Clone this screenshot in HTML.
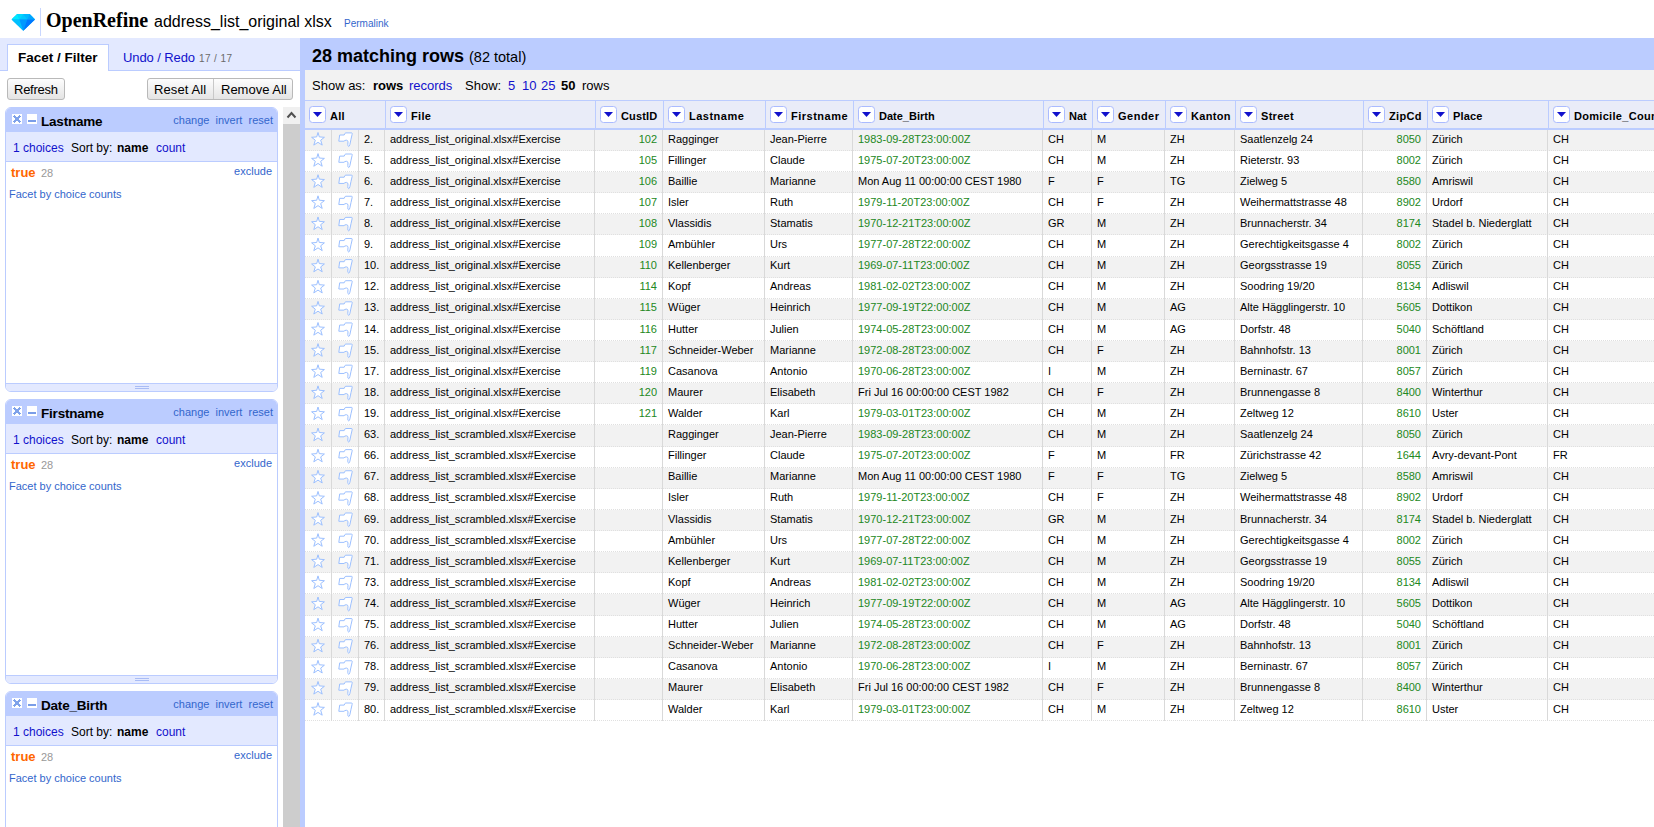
<!DOCTYPE html><html><head><meta charset="utf-8"><style>
html,body{margin:0;padding:0;background:#fff;width:1654px;height:827px;overflow:hidden;}
body{font-family:"Liberation Sans", sans-serif;position:relative;}
.t{position:absolute;white-space:nowrap;}
.r{position:absolute;}
</style></head><body>
<svg style="position:absolute;left:0;top:0" width="40" height="38" viewBox="0 0 40 38">
<polygon points="17.3,13.9 29.6,13.9 35,19.6 23.3,30.8 11.6,19.6" fill="#00b0ff"/>
<polygon points="17.3,13.9 29.6,13.9 35,19.6 11.6,19.6" fill="#00c8ff"/>
<polygon points="11.6,19.6 17.3,13.9 19.5,19.6" fill="#00eaff"/>
<polygon points="17.3,13.9 23.3,13.9 19.5,19.6" fill="#00d8ff"/>
<polygon points="23.3,13.9 29.6,13.9 27.2,19.6" fill="#00b8ff"/>
<polygon points="29.6,13.9 35,19.6 27.2,19.6" fill="#00a4ff"/>
<polygon points="11.6,19.6 19.5,19.6 23.3,30.8" fill="#00c0ff"/>
<polygon points="19.5,19.6 27.2,19.6 23.3,30.8" fill="#0098ff"/>
<polygon points="27.2,19.6 35,19.6 23.3,30.8" fill="#0078ff"/>
</svg>
<div class="r" style="left:40px;top:8px;width:1px;height:28px;background:#c8d6ff;"></div>
<div class="t" style="top:10px;font-size:20px;line-height:20px;color:#000;left:46px;font-weight:bold;font-family:'Liberation Serif', serif;">OpenRefine</div>
<div class="t" style="top:14px;font-size:16px;line-height:16px;color:#000;left:154px;">address_list_original xlsx</div>
<div class="t" style="top:19px;font-size:10px;line-height:10px;color:#3366cc;left:344px;">Permalink</div>
<div class="r" style="left:0px;top:38px;width:300px;height:32px;background:#e3e9ff;"></div>
<div class="r" style="left:0px;top:70px;width:300px;height:1px;background:#bbccff;"></div>
<div class="r" style="left:7px;top:44px;width:100px;height:26px;background:#fff;border:1px solid #bbccff;border-bottom:none;"></div>
<div class="r" style="left:8px;top:70px;width:100px;height:1px;background:#fff;"></div>
<div class="t" style="top:51px;font-size:13.5px;line-height:13.5px;color:#000;left:18px;font-weight:bold;">Facet / Filter</div>
<div class="t" style="top:51px;font-size:13px;line-height:13px;color:#1111cc;left:123px;letter-spacing:-0.1px;">Undo / Redo</div>
<div class="t" style="top:54px;font-size:10px;line-height:10px;color:#6a6a6a;left:199px;letter-spacing:0.4px;">17 / 17</div>
<div class="r" style="left:7px;top:78px;width:58px;height:22px;background:linear-gradient(#fdfdfd,#e4e4e4);border:1px solid #b9b9b9;border-radius:3px;box-sizing:border-box;"></div>
<div class="t" style="top:83px;font-size:13px;line-height:13px;color:#000;left:14px;letter-spacing:-0.25px;">Refresh</div>
<div class="r" style="left:147px;top:78px;width:146px;height:22px;background:linear-gradient(#fdfdfd,#e4e4e4);border:1px solid #b9b9b9;border-radius:3px;box-sizing:border-box;"></div>
<div class="r" style="left:213px;top:79px;width:1px;height:20px;background:#c8c8c8;"></div>
<div class="t" style="top:83px;font-size:13px;line-height:13px;color:#000;left:154px;letter-spacing:0.1px;">Reset All</div>
<div class="t" style="top:83px;font-size:13px;line-height:13px;color:#000;left:221px;">Remove All</div>
<div class="r" style="left:283px;top:107px;width:17px;height:17px;background:#f0f0f0;"></div>
<svg style="position:absolute;left:283px;top:107px" width="17" height="17"><polyline points="4.5,10.5 8.5,6 12.5,10.5" fill="none" stroke="#505050" stroke-width="2"/></svg>
<div class="r" style="left:283px;top:124px;width:17px;height:703px;background:#cdcdcd;"></div>
<div class="r" style="left:5px;top:107px;width:273px;height:285px;box-sizing:border-box;border:1px solid #bbccff;border-radius:6px;background:#fff;overflow:hidden"><div style="position:absolute;left:0;top:0;right:0;height:24px;background:#bbccff"></div><div style="position:absolute;left:0;top:24px;right:0;height:29px;background:#e3e9ff;border-bottom:1px solid #bbccff"></div><div style="position:absolute;left:0;top:275px;right:0;height:8px;background:#e3e9ff;border-top:1px solid #bbccff"></div></div>
<div class="r" style="left:135px;top:386px;width:14px;height:1px;background:#a9bcf5;"></div>
<div class="r" style="left:135px;top:388px;width:14px;height:1px;background:#a9bcf5;"></div>
<svg style="position:absolute;left:12px;top:114px" width="10" height="10"><rect width="10" height="10" fill="#fff"/><g fill="#7fa2ea" shape-rendering="crispEdges"><rect x="2" y="1" width="1" height="1"/><rect x="7" y="1" width="1" height="1"/><rect x="1" y="2" width="1" height="1"/><rect x="2" y="2" width="1" height="1"/><rect x="3" y="2" width="1" height="1"/><rect x="6" y="2" width="1" height="1"/><rect x="7" y="2" width="1" height="1"/><rect x="8" y="2" width="1" height="1"/><rect x="2" y="3" width="1" height="1"/><rect x="3" y="3" width="1" height="1"/><rect x="4" y="3" width="1" height="1"/><rect x="5" y="3" width="1" height="1"/><rect x="6" y="3" width="1" height="1"/><rect x="7" y="3" width="1" height="1"/><rect x="3" y="4" width="1" height="1"/><rect x="4" y="4" width="1" height="1"/><rect x="5" y="4" width="1" height="1"/><rect x="6" y="4" width="1" height="1"/><rect x="3" y="5" width="1" height="1"/><rect x="4" y="5" width="1" height="1"/><rect x="5" y="5" width="1" height="1"/><rect x="6" y="5" width="1" height="1"/><rect x="2" y="6" width="1" height="1"/><rect x="3" y="6" width="1" height="1"/><rect x="4" y="6" width="1" height="1"/><rect x="5" y="6" width="1" height="1"/><rect x="6" y="6" width="1" height="1"/><rect x="7" y="6" width="1" height="1"/><rect x="1" y="7" width="1" height="1"/><rect x="2" y="7" width="1" height="1"/><rect x="3" y="7" width="1" height="1"/><rect x="6" y="7" width="1" height="1"/><rect x="7" y="7" width="1" height="1"/><rect x="8" y="7" width="1" height="1"/><rect x="2" y="8" width="1" height="1"/><rect x="7" y="8" width="1" height="1"/></g></svg>
<svg style="position:absolute;left:27px;top:114px" width="10" height="10"><rect width="10" height="10" fill="#fff"/><rect x="1" y="6" width="8" height="2" fill="#7a9de8"/></svg>
<div class="t" style="top:115px;font-size:13.5px;line-height:13.5px;color:#000;left:41px;font-weight:bold;letter-spacing:-0.2px;">Lastname</div>
<div class="t" style="top:115px;font-size:11px;line-height:11px;color:#3366cc;right:1381px;">change&nbsp; invert&nbsp; reset</div>
<div class="t" style="top:142px;font-size:12px;line-height:12px;color:#1111cc;left:13px;">1 choices</div>
<div class="t" style="top:142px;font-size:12px;line-height:12px;color:#000;left:71px;">Sort by:</div>
<div class="t" style="top:142px;font-size:12px;line-height:12px;color:#000;left:117px;font-weight:bold;">name</div>
<div class="t" style="top:142px;font-size:12px;line-height:12px;color:#1111cc;left:156px;">count</div>
<div class="t" style="top:166px;font-size:13px;line-height:13px;color:#ff6600;left:11px;font-weight:bold;">true</div>
<div class="t" style="top:168px;font-size:11px;line-height:11px;color:#999999;left:41px;">28</div>
<div class="t" style="top:166px;font-size:11px;line-height:11px;color:#3366cc;right:1382px;">exclude</div>
<div class="t" style="top:189px;font-size:11px;line-height:11px;color:#3366cc;left:9px;">Facet by choice counts</div>
<div class="r" style="left:5px;top:399px;width:273px;height:285px;box-sizing:border-box;border:1px solid #bbccff;border-radius:6px;background:#fff;overflow:hidden"><div style="position:absolute;left:0;top:0;right:0;height:24px;background:#bbccff"></div><div style="position:absolute;left:0;top:24px;right:0;height:29px;background:#e3e9ff;border-bottom:1px solid #bbccff"></div><div style="position:absolute;left:0;top:275px;right:0;height:8px;background:#e3e9ff;border-top:1px solid #bbccff"></div></div>
<div class="r" style="left:135px;top:678px;width:14px;height:1px;background:#a9bcf5;"></div>
<div class="r" style="left:135px;top:680px;width:14px;height:1px;background:#a9bcf5;"></div>
<svg style="position:absolute;left:12px;top:406px" width="10" height="10"><rect width="10" height="10" fill="#fff"/><g fill="#7fa2ea" shape-rendering="crispEdges"><rect x="2" y="1" width="1" height="1"/><rect x="7" y="1" width="1" height="1"/><rect x="1" y="2" width="1" height="1"/><rect x="2" y="2" width="1" height="1"/><rect x="3" y="2" width="1" height="1"/><rect x="6" y="2" width="1" height="1"/><rect x="7" y="2" width="1" height="1"/><rect x="8" y="2" width="1" height="1"/><rect x="2" y="3" width="1" height="1"/><rect x="3" y="3" width="1" height="1"/><rect x="4" y="3" width="1" height="1"/><rect x="5" y="3" width="1" height="1"/><rect x="6" y="3" width="1" height="1"/><rect x="7" y="3" width="1" height="1"/><rect x="3" y="4" width="1" height="1"/><rect x="4" y="4" width="1" height="1"/><rect x="5" y="4" width="1" height="1"/><rect x="6" y="4" width="1" height="1"/><rect x="3" y="5" width="1" height="1"/><rect x="4" y="5" width="1" height="1"/><rect x="5" y="5" width="1" height="1"/><rect x="6" y="5" width="1" height="1"/><rect x="2" y="6" width="1" height="1"/><rect x="3" y="6" width="1" height="1"/><rect x="4" y="6" width="1" height="1"/><rect x="5" y="6" width="1" height="1"/><rect x="6" y="6" width="1" height="1"/><rect x="7" y="6" width="1" height="1"/><rect x="1" y="7" width="1" height="1"/><rect x="2" y="7" width="1" height="1"/><rect x="3" y="7" width="1" height="1"/><rect x="6" y="7" width="1" height="1"/><rect x="7" y="7" width="1" height="1"/><rect x="8" y="7" width="1" height="1"/><rect x="2" y="8" width="1" height="1"/><rect x="7" y="8" width="1" height="1"/></g></svg>
<svg style="position:absolute;left:27px;top:406px" width="10" height="10"><rect width="10" height="10" fill="#fff"/><rect x="1" y="6" width="8" height="2" fill="#7a9de8"/></svg>
<div class="t" style="top:407px;font-size:13.5px;line-height:13.5px;color:#000;left:41px;font-weight:bold;letter-spacing:-0.2px;">Firstname</div>
<div class="t" style="top:407px;font-size:11px;line-height:11px;color:#3366cc;right:1381px;">change&nbsp; invert&nbsp; reset</div>
<div class="t" style="top:434px;font-size:12px;line-height:12px;color:#1111cc;left:13px;">1 choices</div>
<div class="t" style="top:434px;font-size:12px;line-height:12px;color:#000;left:71px;">Sort by:</div>
<div class="t" style="top:434px;font-size:12px;line-height:12px;color:#000;left:117px;font-weight:bold;">name</div>
<div class="t" style="top:434px;font-size:12px;line-height:12px;color:#1111cc;left:156px;">count</div>
<div class="t" style="top:458px;font-size:13px;line-height:13px;color:#ff6600;left:11px;font-weight:bold;">true</div>
<div class="t" style="top:460px;font-size:11px;line-height:11px;color:#999999;left:41px;">28</div>
<div class="t" style="top:458px;font-size:11px;line-height:11px;color:#3366cc;right:1382px;">exclude</div>
<div class="t" style="top:481px;font-size:11px;line-height:11px;color:#3366cc;left:9px;">Facet by choice counts</div>
<div class="r" style="left:5px;top:691px;width:273px;height:285px;box-sizing:border-box;border:1px solid #bbccff;border-radius:6px;background:#fff;overflow:hidden"><div style="position:absolute;left:0;top:0;right:0;height:24px;background:#bbccff"></div><div style="position:absolute;left:0;top:24px;right:0;height:29px;background:#e3e9ff;border-bottom:1px solid #bbccff"></div><div style="position:absolute;left:0;top:275px;right:0;height:8px;background:#e3e9ff;border-top:1px solid #bbccff"></div></div>
<div class="r" style="left:135px;top:970px;width:14px;height:1px;background:#a9bcf5;"></div>
<div class="r" style="left:135px;top:972px;width:14px;height:1px;background:#a9bcf5;"></div>
<svg style="position:absolute;left:12px;top:698px" width="10" height="10"><rect width="10" height="10" fill="#fff"/><g fill="#7fa2ea" shape-rendering="crispEdges"><rect x="2" y="1" width="1" height="1"/><rect x="7" y="1" width="1" height="1"/><rect x="1" y="2" width="1" height="1"/><rect x="2" y="2" width="1" height="1"/><rect x="3" y="2" width="1" height="1"/><rect x="6" y="2" width="1" height="1"/><rect x="7" y="2" width="1" height="1"/><rect x="8" y="2" width="1" height="1"/><rect x="2" y="3" width="1" height="1"/><rect x="3" y="3" width="1" height="1"/><rect x="4" y="3" width="1" height="1"/><rect x="5" y="3" width="1" height="1"/><rect x="6" y="3" width="1" height="1"/><rect x="7" y="3" width="1" height="1"/><rect x="3" y="4" width="1" height="1"/><rect x="4" y="4" width="1" height="1"/><rect x="5" y="4" width="1" height="1"/><rect x="6" y="4" width="1" height="1"/><rect x="3" y="5" width="1" height="1"/><rect x="4" y="5" width="1" height="1"/><rect x="5" y="5" width="1" height="1"/><rect x="6" y="5" width="1" height="1"/><rect x="2" y="6" width="1" height="1"/><rect x="3" y="6" width="1" height="1"/><rect x="4" y="6" width="1" height="1"/><rect x="5" y="6" width="1" height="1"/><rect x="6" y="6" width="1" height="1"/><rect x="7" y="6" width="1" height="1"/><rect x="1" y="7" width="1" height="1"/><rect x="2" y="7" width="1" height="1"/><rect x="3" y="7" width="1" height="1"/><rect x="6" y="7" width="1" height="1"/><rect x="7" y="7" width="1" height="1"/><rect x="8" y="7" width="1" height="1"/><rect x="2" y="8" width="1" height="1"/><rect x="7" y="8" width="1" height="1"/></g></svg>
<svg style="position:absolute;left:27px;top:698px" width="10" height="10"><rect width="10" height="10" fill="#fff"/><rect x="1" y="6" width="8" height="2" fill="#7a9de8"/></svg>
<div class="t" style="top:699px;font-size:13.5px;line-height:13.5px;color:#000;left:41px;font-weight:bold;letter-spacing:-0.2px;">Date_Birth</div>
<div class="t" style="top:699px;font-size:11px;line-height:11px;color:#3366cc;right:1381px;">change&nbsp; invert&nbsp; reset</div>
<div class="t" style="top:726px;font-size:12px;line-height:12px;color:#1111cc;left:13px;">1 choices</div>
<div class="t" style="top:726px;font-size:12px;line-height:12px;color:#000;left:71px;">Sort by:</div>
<div class="t" style="top:726px;font-size:12px;line-height:12px;color:#000;left:117px;font-weight:bold;">name</div>
<div class="t" style="top:726px;font-size:12px;line-height:12px;color:#1111cc;left:156px;">count</div>
<div class="t" style="top:750px;font-size:13px;line-height:13px;color:#ff6600;left:11px;font-weight:bold;">true</div>
<div class="t" style="top:752px;font-size:11px;line-height:11px;color:#999999;left:41px;">28</div>
<div class="t" style="top:750px;font-size:11px;line-height:11px;color:#3366cc;right:1382px;">exclude</div>
<div class="t" style="top:773px;font-size:11px;line-height:11px;color:#3366cc;left:9px;">Facet by choice counts</div>
<div class="r" style="left:300px;top:38px;width:1354px;height:32px;background:#bbccff;"></div>
<div class="r" style="left:300px;top:38px;width:5px;height:789px;background:#bbccff;"></div>
<div class="t" style="top:47px;font-size:18px;line-height:18px;color:#000;left:312px;font-weight:bold;">28 matching rows</div>
<div class="t" style="top:50px;font-size:14.5px;line-height:14.5px;color:#000;left:469px;">(82 total)</div>
<div class="r" style="left:305px;top:70px;width:1349px;height:30px;background:#f2f2f2;"></div>
<div class="t" style="top:79px;font-size:13px;line-height:13px;color:#000;left:312px;">Show as:</div>
<div class="t" style="top:79px;font-size:13px;line-height:13px;color:#000;left:373px;font-weight:bold;">rows</div>
<div class="t" style="top:79px;font-size:13px;line-height:13px;color:#1111cc;left:409px;">records</div>
<div class="t" style="top:79px;font-size:13px;line-height:13px;color:#000;left:465px;">Show:</div>
<div class="t" style="top:79px;font-size:13px;line-height:13px;color:#1111cc;left:508px;">5</div>
<div class="t" style="top:79px;font-size:13px;line-height:13px;color:#1111cc;left:522px;">10</div>
<div class="t" style="top:79px;font-size:13px;line-height:13px;color:#1111cc;left:541px;">25</div>
<div class="t" style="top:79px;font-size:13px;line-height:13px;color:#000;left:561px;font-weight:bold;">50</div>
<div class="t" style="top:79px;font-size:13px;line-height:13px;color:#000;left:582px;">rows</div>
<div class="r" style="left:305px;top:100px;width:1349px;height:1px;background:#bbccff;"></div>
<div class="r" style="left:305px;top:101px;width:1349px;height:27px;background:#e9ecf8;"></div>
<div class="r" style="left:305px;top:128px;width:1349px;height:2px;background:#bbccff;"></div>
<div class="r" style="left:385px;top:101px;width:1px;height:27px;background:#bbccff;"></div>
<div class="r" style="left:595px;top:101px;width:1px;height:27px;background:#bbccff;"></div>
<div class="r" style="left:663px;top:101px;width:1px;height:27px;background:#bbccff;"></div>
<div class="r" style="left:765px;top:101px;width:1px;height:27px;background:#bbccff;"></div>
<div class="r" style="left:853px;top:101px;width:1px;height:27px;background:#bbccff;"></div>
<div class="r" style="left:1043px;top:101px;width:1px;height:27px;background:#bbccff;"></div>
<div class="r" style="left:1092px;top:101px;width:1px;height:27px;background:#bbccff;"></div>
<div class="r" style="left:1165px;top:101px;width:1px;height:27px;background:#bbccff;"></div>
<div class="r" style="left:1235px;top:101px;width:1px;height:27px;background:#bbccff;"></div>
<div class="r" style="left:1363px;top:101px;width:1px;height:27px;background:#bbccff;"></div>
<div class="r" style="left:1427px;top:101px;width:1px;height:27px;background:#bbccff;"></div>
<div class="r" style="left:1548px;top:101px;width:1px;height:27px;background:#bbccff;"></div>
<svg style="position:absolute;left:309px;top:106px" width="17" height="17"><rect x="0.5" y="0.5" width="16" height="16" rx="3" ry="3" fill="#fff" stroke="#aabbff"/><polygon points="4,6 13,6 8.5,11" fill="#1111cc"/></svg>
<div class="t" style="top:111px;font-size:11px;line-height:11px;color:#000;left:330px;font-weight:bold;letter-spacing:0.3px;">All</div>
<svg style="position:absolute;left:390px;top:106px" width="17" height="17"><rect x="0.5" y="0.5" width="16" height="16" rx="3" ry="3" fill="#fff" stroke="#aabbff"/><polygon points="4,6 13,6 8.5,11" fill="#1111cc"/></svg>
<div class="t" style="top:111px;font-size:11px;line-height:11px;color:#000;left:411px;font-weight:bold;letter-spacing:0.3px;">File</div>
<svg style="position:absolute;left:600px;top:106px" width="17" height="17"><rect x="0.5" y="0.5" width="16" height="16" rx="3" ry="3" fill="#fff" stroke="#aabbff"/><polygon points="4,6 13,6 8.5,11" fill="#1111cc"/></svg>
<div class="t" style="top:111px;font-size:11px;line-height:11px;color:#000;left:621px;font-weight:bold;letter-spacing:0.15px;">CustID</div>
<svg style="position:absolute;left:668px;top:106px" width="17" height="17"><rect x="0.5" y="0.5" width="16" height="16" rx="3" ry="3" fill="#fff" stroke="#aabbff"/><polygon points="4,6 13,6 8.5,11" fill="#1111cc"/></svg>
<div class="t" style="top:111px;font-size:11px;line-height:11px;color:#000;left:689px;font-weight:bold;letter-spacing:0.5px;">Lastname</div>
<svg style="position:absolute;left:770px;top:106px" width="17" height="17"><rect x="0.5" y="0.5" width="16" height="16" rx="3" ry="3" fill="#fff" stroke="#aabbff"/><polygon points="4,6 13,6 8.5,11" fill="#1111cc"/></svg>
<div class="t" style="top:111px;font-size:11px;line-height:11px;color:#000;left:791px;font-weight:bold;letter-spacing:0.5px;">Firstname</div>
<svg style="position:absolute;left:858px;top:106px" width="17" height="17"><rect x="0.5" y="0.5" width="16" height="16" rx="3" ry="3" fill="#fff" stroke="#aabbff"/><polygon points="4,6 13,6 8.5,11" fill="#1111cc"/></svg>
<div class="t" style="top:111px;font-size:11px;line-height:11px;color:#000;left:879px;font-weight:bold;letter-spacing:0.0px;">Date_Birth</div>
<svg style="position:absolute;left:1048px;top:106px" width="17" height="17"><rect x="0.5" y="0.5" width="16" height="16" rx="3" ry="3" fill="#fff" stroke="#aabbff"/><polygon points="4,6 13,6 8.5,11" fill="#1111cc"/></svg>
<div class="t" style="top:111px;font-size:11px;line-height:11px;color:#000;left:1069px;font-weight:bold;letter-spacing:0.0px;">Nat</div>
<svg style="position:absolute;left:1097px;top:106px" width="17" height="17"><rect x="0.5" y="0.5" width="16" height="16" rx="3" ry="3" fill="#fff" stroke="#aabbff"/><polygon points="4,6 13,6 8.5,11" fill="#1111cc"/></svg>
<div class="t" style="top:111px;font-size:11px;line-height:11px;color:#000;left:1118px;font-weight:bold;letter-spacing:0.5px;">Gender</div>
<svg style="position:absolute;left:1170px;top:106px" width="17" height="17"><rect x="0.5" y="0.5" width="16" height="16" rx="3" ry="3" fill="#fff" stroke="#aabbff"/><polygon points="4,6 13,6 8.5,11" fill="#1111cc"/></svg>
<div class="t" style="top:111px;font-size:11px;line-height:11px;color:#000;left:1191px;font-weight:bold;letter-spacing:0.3px;">Kanton</div>
<svg style="position:absolute;left:1240px;top:106px" width="17" height="17"><rect x="0.5" y="0.5" width="16" height="16" rx="3" ry="3" fill="#fff" stroke="#aabbff"/><polygon points="4,6 13,6 8.5,11" fill="#1111cc"/></svg>
<div class="t" style="top:111px;font-size:11px;line-height:11px;color:#000;left:1261px;font-weight:bold;letter-spacing:0.3px;">Street</div>
<svg style="position:absolute;left:1368px;top:106px" width="17" height="17"><rect x="0.5" y="0.5" width="16" height="16" rx="3" ry="3" fill="#fff" stroke="#aabbff"/><polygon points="4,6 13,6 8.5,11" fill="#1111cc"/></svg>
<div class="t" style="top:111px;font-size:11px;line-height:11px;color:#000;left:1389px;font-weight:bold;letter-spacing:0.3px;">ZipCd</div>
<svg style="position:absolute;left:1432px;top:106px" width="17" height="17"><rect x="0.5" y="0.5" width="16" height="16" rx="3" ry="3" fill="#fff" stroke="#aabbff"/><polygon points="4,6 13,6 8.5,11" fill="#1111cc"/></svg>
<div class="t" style="top:111px;font-size:11px;line-height:11px;color:#000;left:1453px;font-weight:bold;letter-spacing:0.15px;">Place</div>
<svg style="position:absolute;left:1553px;top:106px" width="17" height="17"><rect x="0.5" y="0.5" width="16" height="16" rx="3" ry="3" fill="#fff" stroke="#aabbff"/><polygon points="4,6 13,6 8.5,11" fill="#1111cc"/></svg>
<div class="t" style="top:111px;font-size:11px;line-height:11px;color:#000;left:1574px;font-weight:bold;letter-spacing:0.3px;">Domicile_Country</div>
<div class="r" style="left:305px;top:130px;width:1349px;height:21px;background:#f2f2f2;"></div>
<div class="r" style="left:305px;top:150px;width:1349px;height:1px;background:repeating-linear-gradient(90deg,#e0e0e0 0 1px,transparent 1px 2px);"></div>
<svg style="position:absolute;left:311px;top:130px" width="15" height="17"><g transform="translate(0,0.50)"><polygon points="7,2.0 8.3,6.4 13.4,6.8 9.7,9.7 11.2,14.6 7,11.8 2.8,14.6 4.3,9.7 0.6,6.8 5.7,6.4" fill="#fff" stroke="#9cc0ff" stroke-width="1" stroke-linejoin="round"/></g></svg>
<svg style="position:absolute;left:336px;top:130px" width="18" height="18"><g transform="translate(0,0.20)"><path d="M3.7,4.8 L8.2,4.8 Q8.8,2.7 9.8,2.7 L15.8,2.7 Q16.4,3 16.1,4.2 L15,9 L13.9,14.2 Q13.4,16.3 12.7,16.2 Q11.7,16 11.8,14.2 L12,11.6 Q11.8,10 10.5,10 Q8.6,10 8,11 L2.8,11 Z" fill="#fff" stroke="#9cc0ff" stroke-width="1" stroke-linejoin="round"/></g></svg>
<div class="t" style="top:134px;font-size:11px;line-height:11px;color:#000;left:364px;">2.</div>
<div class="t" style="top:134px;font-size:11px;line-height:11px;color:#000;left:390px;">address_list_original.xlsx#Exercise</div>
<div class="t" style="top:134px;font-size:11px;line-height:11px;color:#228822;right:997px;">102</div>
<div class="t" style="top:134px;font-size:11px;line-height:11px;color:#000;left:668px;">Ragginger</div>
<div class="t" style="top:134px;font-size:11px;line-height:11px;color:#000;left:770px;">Jean-Pierre</div>
<div class="t" style="top:134px;font-size:11px;line-height:11px;color:#228822;left:858px;">1983-09-28T23:00:00Z</div>
<div class="t" style="top:134px;font-size:11px;line-height:11px;color:#000;left:1048px;">CH</div>
<div class="t" style="top:134px;font-size:11px;line-height:11px;color:#000;left:1097px;">M</div>
<div class="t" style="top:134px;font-size:11px;line-height:11px;color:#000;left:1170px;">ZH</div>
<div class="t" style="top:134px;font-size:11px;line-height:11px;color:#000;left:1240px;">Saatlenzelg 24</div>
<div class="t" style="top:134px;font-size:11px;line-height:11px;color:#228822;right:233px;">8050</div>
<div class="t" style="top:134px;font-size:11px;line-height:11px;color:#000;left:1432px;">Zürich</div>
<div class="t" style="top:134px;font-size:11px;line-height:11px;color:#000;left:1553px;">CH</div>
<div class="r" style="left:305px;top:171px;width:1349px;height:1px;background:repeating-linear-gradient(90deg,#e0e0e0 0 1px,transparent 1px 2px);"></div>
<svg style="position:absolute;left:311px;top:151px" width="15" height="17"><g transform="translate(0,0.62)"><polygon points="7,2.0 8.3,6.4 13.4,6.8 9.7,9.7 11.2,14.6 7,11.8 2.8,14.6 4.3,9.7 0.6,6.8 5.7,6.4" fill="#fff" stroke="#9cc0ff" stroke-width="1" stroke-linejoin="round"/></g></svg>
<svg style="position:absolute;left:336px;top:151px" width="18" height="18"><g transform="translate(0,0.31)"><path d="M3.7,4.8 L8.2,4.8 Q8.8,2.7 9.8,2.7 L15.8,2.7 Q16.4,3 16.1,4.2 L15,9 L13.9,14.2 Q13.4,16.3 12.7,16.2 Q11.7,16 11.8,14.2 L12,11.6 Q11.8,10 10.5,10 Q8.6,10 8,11 L2.8,11 Z" fill="#fff" stroke="#9cc0ff" stroke-width="1" stroke-linejoin="round"/></g></svg>
<div class="t" style="top:155px;font-size:11px;line-height:11px;color:#000;left:364px;">5.</div>
<div class="t" style="top:155px;font-size:11px;line-height:11px;color:#000;left:390px;">address_list_original.xlsx#Exercise</div>
<div class="t" style="top:155px;font-size:11px;line-height:11px;color:#228822;right:997px;">105</div>
<div class="t" style="top:155px;font-size:11px;line-height:11px;color:#000;left:668px;">Fillinger</div>
<div class="t" style="top:155px;font-size:11px;line-height:11px;color:#000;left:770px;">Claude</div>
<div class="t" style="top:155px;font-size:11px;line-height:11px;color:#228822;left:858px;">1975-07-20T23:00:00Z</div>
<div class="t" style="top:155px;font-size:11px;line-height:11px;color:#000;left:1048px;">CH</div>
<div class="t" style="top:155px;font-size:11px;line-height:11px;color:#000;left:1097px;">M</div>
<div class="t" style="top:155px;font-size:11px;line-height:11px;color:#000;left:1170px;">ZH</div>
<div class="t" style="top:155px;font-size:11px;line-height:11px;color:#000;left:1240px;">Rieterstr. 93</div>
<div class="t" style="top:155px;font-size:11px;line-height:11px;color:#228822;right:233px;">8002</div>
<div class="t" style="top:155px;font-size:11px;line-height:11px;color:#000;left:1432px;">Zürich</div>
<div class="t" style="top:155px;font-size:11px;line-height:11px;color:#000;left:1553px;">CH</div>
<div class="r" style="left:305px;top:172px;width:1349px;height:21px;background:#f2f2f2;"></div>
<div class="r" style="left:305px;top:192px;width:1349px;height:1px;background:repeating-linear-gradient(90deg,#e0e0e0 0 1px,transparent 1px 2px);"></div>
<svg style="position:absolute;left:311px;top:172px" width="15" height="17"><g transform="translate(0,0.73)"><polygon points="7,2.0 8.3,6.4 13.4,6.8 9.7,9.7 11.2,14.6 7,11.8 2.8,14.6 4.3,9.7 0.6,6.8 5.7,6.4" fill="#fff" stroke="#9cc0ff" stroke-width="1" stroke-linejoin="round"/></g></svg>
<svg style="position:absolute;left:336px;top:172px" width="18" height="18"><g transform="translate(0,0.43)"><path d="M3.7,4.8 L8.2,4.8 Q8.8,2.7 9.8,2.7 L15.8,2.7 Q16.4,3 16.1,4.2 L15,9 L13.9,14.2 Q13.4,16.3 12.7,16.2 Q11.7,16 11.8,14.2 L12,11.6 Q11.8,10 10.5,10 Q8.6,10 8,11 L2.8,11 Z" fill="#fff" stroke="#9cc0ff" stroke-width="1" stroke-linejoin="round"/></g></svg>
<div class="t" style="top:176px;font-size:11px;line-height:11px;color:#000;left:364px;">6.</div>
<div class="t" style="top:176px;font-size:11px;line-height:11px;color:#000;left:390px;">address_list_original.xlsx#Exercise</div>
<div class="t" style="top:176px;font-size:11px;line-height:11px;color:#228822;right:997px;">106</div>
<div class="t" style="top:176px;font-size:11px;line-height:11px;color:#000;left:668px;">Baillie</div>
<div class="t" style="top:176px;font-size:11px;line-height:11px;color:#000;left:770px;">Marianne</div>
<div class="t" style="top:176px;font-size:11px;line-height:11px;color:#000;left:858px;">Mon Aug 11 00:00:00 CEST 1980</div>
<div class="t" style="top:176px;font-size:11px;line-height:11px;color:#000;left:1048px;">F</div>
<div class="t" style="top:176px;font-size:11px;line-height:11px;color:#000;left:1097px;">F</div>
<div class="t" style="top:176px;font-size:11px;line-height:11px;color:#000;left:1170px;">TG</div>
<div class="t" style="top:176px;font-size:11px;line-height:11px;color:#000;left:1240px;">Zielweg 5</div>
<div class="t" style="top:176px;font-size:11px;line-height:11px;color:#228822;right:233px;">8580</div>
<div class="t" style="top:176px;font-size:11px;line-height:11px;color:#000;left:1432px;">Amriswil</div>
<div class="t" style="top:176px;font-size:11px;line-height:11px;color:#000;left:1553px;">CH</div>
<div class="r" style="left:305px;top:213px;width:1349px;height:1px;background:repeating-linear-gradient(90deg,#e0e0e0 0 1px,transparent 1px 2px);"></div>
<svg style="position:absolute;left:311px;top:193px" width="15" height="17"><g transform="translate(0,0.84)"><polygon points="7,2.0 8.3,6.4 13.4,6.8 9.7,9.7 11.2,14.6 7,11.8 2.8,14.6 4.3,9.7 0.6,6.8 5.7,6.4" fill="#fff" stroke="#9cc0ff" stroke-width="1" stroke-linejoin="round"/></g></svg>
<svg style="position:absolute;left:336px;top:193px" width="18" height="18"><g transform="translate(0,0.54)"><path d="M3.7,4.8 L8.2,4.8 Q8.8,2.7 9.8,2.7 L15.8,2.7 Q16.4,3 16.1,4.2 L15,9 L13.9,14.2 Q13.4,16.3 12.7,16.2 Q11.7,16 11.8,14.2 L12,11.6 Q11.8,10 10.5,10 Q8.6,10 8,11 L2.8,11 Z" fill="#fff" stroke="#9cc0ff" stroke-width="1" stroke-linejoin="round"/></g></svg>
<div class="t" style="top:197px;font-size:11px;line-height:11px;color:#000;left:364px;">7.</div>
<div class="t" style="top:197px;font-size:11px;line-height:11px;color:#000;left:390px;">address_list_original.xlsx#Exercise</div>
<div class="t" style="top:197px;font-size:11px;line-height:11px;color:#228822;right:997px;">107</div>
<div class="t" style="top:197px;font-size:11px;line-height:11px;color:#000;left:668px;">Isler</div>
<div class="t" style="top:197px;font-size:11px;line-height:11px;color:#000;left:770px;">Ruth</div>
<div class="t" style="top:197px;font-size:11px;line-height:11px;color:#228822;left:858px;">1979-11-20T23:00:00Z</div>
<div class="t" style="top:197px;font-size:11px;line-height:11px;color:#000;left:1048px;">CH</div>
<div class="t" style="top:197px;font-size:11px;line-height:11px;color:#000;left:1097px;">F</div>
<div class="t" style="top:197px;font-size:11px;line-height:11px;color:#000;left:1170px;">ZH</div>
<div class="t" style="top:197px;font-size:11px;line-height:11px;color:#000;left:1240px;">Weihermattstrasse 48</div>
<div class="t" style="top:197px;font-size:11px;line-height:11px;color:#228822;right:233px;">8902</div>
<div class="t" style="top:197px;font-size:11px;line-height:11px;color:#000;left:1432px;">Urdorf</div>
<div class="t" style="top:197px;font-size:11px;line-height:11px;color:#000;left:1553px;">CH</div>
<div class="r" style="left:305px;top:214px;width:1349px;height:21px;background:#f2f2f2;"></div>
<div class="r" style="left:305px;top:234px;width:1349px;height:1px;background:repeating-linear-gradient(90deg,#e0e0e0 0 1px,transparent 1px 2px);"></div>
<svg style="position:absolute;left:311px;top:214px" width="15" height="17"><g transform="translate(0,0.96)"><polygon points="7,2.0 8.3,6.4 13.4,6.8 9.7,9.7 11.2,14.6 7,11.8 2.8,14.6 4.3,9.7 0.6,6.8 5.7,6.4" fill="#fff" stroke="#9cc0ff" stroke-width="1" stroke-linejoin="round"/></g></svg>
<svg style="position:absolute;left:336px;top:214px" width="18" height="18"><g transform="translate(0,0.66)"><path d="M3.7,4.8 L8.2,4.8 Q8.8,2.7 9.8,2.7 L15.8,2.7 Q16.4,3 16.1,4.2 L15,9 L13.9,14.2 Q13.4,16.3 12.7,16.2 Q11.7,16 11.8,14.2 L12,11.6 Q11.8,10 10.5,10 Q8.6,10 8,11 L2.8,11 Z" fill="#fff" stroke="#9cc0ff" stroke-width="1" stroke-linejoin="round"/></g></svg>
<div class="t" style="top:218px;font-size:11px;line-height:11px;color:#000;left:364px;">8.</div>
<div class="t" style="top:218px;font-size:11px;line-height:11px;color:#000;left:390px;">address_list_original.xlsx#Exercise</div>
<div class="t" style="top:218px;font-size:11px;line-height:11px;color:#228822;right:997px;">108</div>
<div class="t" style="top:218px;font-size:11px;line-height:11px;color:#000;left:668px;">Vlassidis</div>
<div class="t" style="top:218px;font-size:11px;line-height:11px;color:#000;left:770px;">Stamatis</div>
<div class="t" style="top:218px;font-size:11px;line-height:11px;color:#228822;left:858px;">1970-12-21T23:00:00Z</div>
<div class="t" style="top:218px;font-size:11px;line-height:11px;color:#000;left:1048px;">GR</div>
<div class="t" style="top:218px;font-size:11px;line-height:11px;color:#000;left:1097px;">M</div>
<div class="t" style="top:218px;font-size:11px;line-height:11px;color:#000;left:1170px;">ZH</div>
<div class="t" style="top:218px;font-size:11px;line-height:11px;color:#000;left:1240px;">Brunnacherstr. 34</div>
<div class="t" style="top:218px;font-size:11px;line-height:11px;color:#228822;right:233px;">8174</div>
<div class="t" style="top:218px;font-size:11px;line-height:11px;color:#000;left:1432px;">Stadel b. Niederglatt</div>
<div class="t" style="top:218px;font-size:11px;line-height:11px;color:#000;left:1553px;">CH</div>
<div class="r" style="left:305px;top:256px;width:1349px;height:1px;background:repeating-linear-gradient(90deg,#e0e0e0 0 1px,transparent 1px 2px);"></div>
<svg style="position:absolute;left:311px;top:236px" width="15" height="17"><g transform="translate(0,0.07)"><polygon points="7,2.0 8.3,6.4 13.4,6.8 9.7,9.7 11.2,14.6 7,11.8 2.8,14.6 4.3,9.7 0.6,6.8 5.7,6.4" fill="#fff" stroke="#9cc0ff" stroke-width="1" stroke-linejoin="round"/></g></svg>
<svg style="position:absolute;left:336px;top:235px" width="18" height="18"><g transform="translate(0,0.77)"><path d="M3.7,4.8 L8.2,4.8 Q8.8,2.7 9.8,2.7 L15.8,2.7 Q16.4,3 16.1,4.2 L15,9 L13.9,14.2 Q13.4,16.3 12.7,16.2 Q11.7,16 11.8,14.2 L12,11.6 Q11.8,10 10.5,10 Q8.6,10 8,11 L2.8,11 Z" fill="#fff" stroke="#9cc0ff" stroke-width="1" stroke-linejoin="round"/></g></svg>
<div class="t" style="top:239px;font-size:11px;line-height:11px;color:#000;left:364px;">9.</div>
<div class="t" style="top:239px;font-size:11px;line-height:11px;color:#000;left:390px;">address_list_original.xlsx#Exercise</div>
<div class="t" style="top:239px;font-size:11px;line-height:11px;color:#228822;right:997px;">109</div>
<div class="t" style="top:239px;font-size:11px;line-height:11px;color:#000;left:668px;">Ambühler</div>
<div class="t" style="top:239px;font-size:11px;line-height:11px;color:#000;left:770px;">Urs</div>
<div class="t" style="top:239px;font-size:11px;line-height:11px;color:#228822;left:858px;">1977-07-28T22:00:00Z</div>
<div class="t" style="top:239px;font-size:11px;line-height:11px;color:#000;left:1048px;">CH</div>
<div class="t" style="top:239px;font-size:11px;line-height:11px;color:#000;left:1097px;">M</div>
<div class="t" style="top:239px;font-size:11px;line-height:11px;color:#000;left:1170px;">ZH</div>
<div class="t" style="top:239px;font-size:11px;line-height:11px;color:#000;left:1240px;">Gerechtigkeitsgasse 4</div>
<div class="t" style="top:239px;font-size:11px;line-height:11px;color:#228822;right:233px;">8002</div>
<div class="t" style="top:239px;font-size:11px;line-height:11px;color:#000;left:1432px;">Zürich</div>
<div class="t" style="top:239px;font-size:11px;line-height:11px;color:#000;left:1553px;">CH</div>
<div class="r" style="left:305px;top:257px;width:1349px;height:21px;background:#f2f2f2;"></div>
<div class="r" style="left:305px;top:277px;width:1349px;height:1px;background:repeating-linear-gradient(90deg,#e0e0e0 0 1px,transparent 1px 2px);"></div>
<svg style="position:absolute;left:311px;top:257px" width="15" height="17"><g transform="translate(0,0.19)"><polygon points="7,2.0 8.3,6.4 13.4,6.8 9.7,9.7 11.2,14.6 7,11.8 2.8,14.6 4.3,9.7 0.6,6.8 5.7,6.4" fill="#fff" stroke="#9cc0ff" stroke-width="1" stroke-linejoin="round"/></g></svg>
<svg style="position:absolute;left:336px;top:256px" width="18" height="18"><g transform="translate(0,0.89)"><path d="M3.7,4.8 L8.2,4.8 Q8.8,2.7 9.8,2.7 L15.8,2.7 Q16.4,3 16.1,4.2 L15,9 L13.9,14.2 Q13.4,16.3 12.7,16.2 Q11.7,16 11.8,14.2 L12,11.6 Q11.8,10 10.5,10 Q8.6,10 8,11 L2.8,11 Z" fill="#fff" stroke="#9cc0ff" stroke-width="1" stroke-linejoin="round"/></g></svg>
<div class="t" style="top:260px;font-size:11px;line-height:11px;color:#000;left:364px;">10.</div>
<div class="t" style="top:260px;font-size:11px;line-height:11px;color:#000;left:390px;">address_list_original.xlsx#Exercise</div>
<div class="t" style="top:260px;font-size:11px;line-height:11px;color:#228822;right:997px;">110</div>
<div class="t" style="top:260px;font-size:11px;line-height:11px;color:#000;left:668px;">Kellenberger</div>
<div class="t" style="top:260px;font-size:11px;line-height:11px;color:#000;left:770px;">Kurt</div>
<div class="t" style="top:260px;font-size:11px;line-height:11px;color:#228822;left:858px;">1969-07-11T23:00:00Z</div>
<div class="t" style="top:260px;font-size:11px;line-height:11px;color:#000;left:1048px;">CH</div>
<div class="t" style="top:260px;font-size:11px;line-height:11px;color:#000;left:1097px;">M</div>
<div class="t" style="top:260px;font-size:11px;line-height:11px;color:#000;left:1170px;">ZH</div>
<div class="t" style="top:260px;font-size:11px;line-height:11px;color:#000;left:1240px;">Georgsstrasse 19</div>
<div class="t" style="top:260px;font-size:11px;line-height:11px;color:#228822;right:233px;">8055</div>
<div class="t" style="top:260px;font-size:11px;line-height:11px;color:#000;left:1432px;">Zürich</div>
<div class="t" style="top:260px;font-size:11px;line-height:11px;color:#000;left:1553px;">CH</div>
<div class="r" style="left:305px;top:298px;width:1349px;height:1px;background:repeating-linear-gradient(90deg,#e0e0e0 0 1px,transparent 1px 2px);"></div>
<svg style="position:absolute;left:311px;top:278px" width="15" height="17"><g transform="translate(0,0.30)"><polygon points="7,2.0 8.3,6.4 13.4,6.8 9.7,9.7 11.2,14.6 7,11.8 2.8,14.6 4.3,9.7 0.6,6.8 5.7,6.4" fill="#fff" stroke="#9cc0ff" stroke-width="1" stroke-linejoin="round"/></g></svg>
<svg style="position:absolute;left:336px;top:278px" width="18" height="18"><g transform="translate(0,0.00)"><path d="M3.7,4.8 L8.2,4.8 Q8.8,2.7 9.8,2.7 L15.8,2.7 Q16.4,3 16.1,4.2 L15,9 L13.9,14.2 Q13.4,16.3 12.7,16.2 Q11.7,16 11.8,14.2 L12,11.6 Q11.8,10 10.5,10 Q8.6,10 8,11 L2.8,11 Z" fill="#fff" stroke="#9cc0ff" stroke-width="1" stroke-linejoin="round"/></g></svg>
<div class="t" style="top:281px;font-size:11px;line-height:11px;color:#000;left:364px;">12.</div>
<div class="t" style="top:281px;font-size:11px;line-height:11px;color:#000;left:390px;">address_list_original.xlsx#Exercise</div>
<div class="t" style="top:281px;font-size:11px;line-height:11px;color:#228822;right:997px;">114</div>
<div class="t" style="top:281px;font-size:11px;line-height:11px;color:#000;left:668px;">Kopf</div>
<div class="t" style="top:281px;font-size:11px;line-height:11px;color:#000;left:770px;">Andreas</div>
<div class="t" style="top:281px;font-size:11px;line-height:11px;color:#228822;left:858px;">1981-02-02T23:00:00Z</div>
<div class="t" style="top:281px;font-size:11px;line-height:11px;color:#000;left:1048px;">CH</div>
<div class="t" style="top:281px;font-size:11px;line-height:11px;color:#000;left:1097px;">M</div>
<div class="t" style="top:281px;font-size:11px;line-height:11px;color:#000;left:1170px;">ZH</div>
<div class="t" style="top:281px;font-size:11px;line-height:11px;color:#000;left:1240px;">Soodring 19/20</div>
<div class="t" style="top:281px;font-size:11px;line-height:11px;color:#228822;right:233px;">8134</div>
<div class="t" style="top:281px;font-size:11px;line-height:11px;color:#000;left:1432px;">Adliswil</div>
<div class="t" style="top:281px;font-size:11px;line-height:11px;color:#000;left:1553px;">CH</div>
<div class="r" style="left:305px;top:299px;width:1349px;height:21px;background:#f2f2f2;"></div>
<div class="r" style="left:305px;top:319px;width:1349px;height:1px;background:repeating-linear-gradient(90deg,#e0e0e0 0 1px,transparent 1px 2px);"></div>
<svg style="position:absolute;left:311px;top:299px" width="15" height="17"><g transform="translate(0,0.42)"><polygon points="7,2.0 8.3,6.4 13.4,6.8 9.7,9.7 11.2,14.6 7,11.8 2.8,14.6 4.3,9.7 0.6,6.8 5.7,6.4" fill="#fff" stroke="#9cc0ff" stroke-width="1" stroke-linejoin="round"/></g></svg>
<svg style="position:absolute;left:336px;top:299px" width="18" height="18"><g transform="translate(0,0.12)"><path d="M3.7,4.8 L8.2,4.8 Q8.8,2.7 9.8,2.7 L15.8,2.7 Q16.4,3 16.1,4.2 L15,9 L13.9,14.2 Q13.4,16.3 12.7,16.2 Q11.7,16 11.8,14.2 L12,11.6 Q11.8,10 10.5,10 Q8.6,10 8,11 L2.8,11 Z" fill="#fff" stroke="#9cc0ff" stroke-width="1" stroke-linejoin="round"/></g></svg>
<div class="t" style="top:302px;font-size:11px;line-height:11px;color:#000;left:364px;">13.</div>
<div class="t" style="top:302px;font-size:11px;line-height:11px;color:#000;left:390px;">address_list_original.xlsx#Exercise</div>
<div class="t" style="top:302px;font-size:11px;line-height:11px;color:#228822;right:997px;">115</div>
<div class="t" style="top:302px;font-size:11px;line-height:11px;color:#000;left:668px;">Wüger</div>
<div class="t" style="top:302px;font-size:11px;line-height:11px;color:#000;left:770px;">Heinrich</div>
<div class="t" style="top:302px;font-size:11px;line-height:11px;color:#228822;left:858px;">1977-09-19T22:00:00Z</div>
<div class="t" style="top:302px;font-size:11px;line-height:11px;color:#000;left:1048px;">CH</div>
<div class="t" style="top:302px;font-size:11px;line-height:11px;color:#000;left:1097px;">M</div>
<div class="t" style="top:302px;font-size:11px;line-height:11px;color:#000;left:1170px;">AG</div>
<div class="t" style="top:302px;font-size:11px;line-height:11px;color:#000;left:1240px;">Alte Hägglingerstr. 10</div>
<div class="t" style="top:302px;font-size:11px;line-height:11px;color:#228822;right:233px;">5605</div>
<div class="t" style="top:302px;font-size:11px;line-height:11px;color:#000;left:1432px;">Dottikon</div>
<div class="t" style="top:302px;font-size:11px;line-height:11px;color:#000;left:1553px;">CH</div>
<div class="r" style="left:305px;top:340px;width:1349px;height:1px;background:repeating-linear-gradient(90deg,#e0e0e0 0 1px,transparent 1px 2px);"></div>
<svg style="position:absolute;left:311px;top:320px" width="15" height="17"><g transform="translate(0,0.53)"><polygon points="7,2.0 8.3,6.4 13.4,6.8 9.7,9.7 11.2,14.6 7,11.8 2.8,14.6 4.3,9.7 0.6,6.8 5.7,6.4" fill="#fff" stroke="#9cc0ff" stroke-width="1" stroke-linejoin="round"/></g></svg>
<svg style="position:absolute;left:336px;top:320px" width="18" height="18"><g transform="translate(0,0.23)"><path d="M3.7,4.8 L8.2,4.8 Q8.8,2.7 9.8,2.7 L15.8,2.7 Q16.4,3 16.1,4.2 L15,9 L13.9,14.2 Q13.4,16.3 12.7,16.2 Q11.7,16 11.8,14.2 L12,11.6 Q11.8,10 10.5,10 Q8.6,10 8,11 L2.8,11 Z" fill="#fff" stroke="#9cc0ff" stroke-width="1" stroke-linejoin="round"/></g></svg>
<div class="t" style="top:324px;font-size:11px;line-height:11px;color:#000;left:364px;">14.</div>
<div class="t" style="top:324px;font-size:11px;line-height:11px;color:#000;left:390px;">address_list_original.xlsx#Exercise</div>
<div class="t" style="top:324px;font-size:11px;line-height:11px;color:#228822;right:997px;">116</div>
<div class="t" style="top:324px;font-size:11px;line-height:11px;color:#000;left:668px;">Hutter</div>
<div class="t" style="top:324px;font-size:11px;line-height:11px;color:#000;left:770px;">Julien</div>
<div class="t" style="top:324px;font-size:11px;line-height:11px;color:#228822;left:858px;">1974-05-28T23:00:00Z</div>
<div class="t" style="top:324px;font-size:11px;line-height:11px;color:#000;left:1048px;">CH</div>
<div class="t" style="top:324px;font-size:11px;line-height:11px;color:#000;left:1097px;">M</div>
<div class="t" style="top:324px;font-size:11px;line-height:11px;color:#000;left:1170px;">AG</div>
<div class="t" style="top:324px;font-size:11px;line-height:11px;color:#000;left:1240px;">Dorfstr. 48</div>
<div class="t" style="top:324px;font-size:11px;line-height:11px;color:#228822;right:233px;">5040</div>
<div class="t" style="top:324px;font-size:11px;line-height:11px;color:#000;left:1432px;">Schöftland</div>
<div class="t" style="top:324px;font-size:11px;line-height:11px;color:#000;left:1553px;">CH</div>
<div class="r" style="left:305px;top:341px;width:1349px;height:21px;background:#f2f2f2;"></div>
<div class="r" style="left:305px;top:361px;width:1349px;height:1px;background:repeating-linear-gradient(90deg,#e0e0e0 0 1px,transparent 1px 2px);"></div>
<svg style="position:absolute;left:311px;top:341px" width="15" height="17"><g transform="translate(0,0.65)"><polygon points="7,2.0 8.3,6.4 13.4,6.8 9.7,9.7 11.2,14.6 7,11.8 2.8,14.6 4.3,9.7 0.6,6.8 5.7,6.4" fill="#fff" stroke="#9cc0ff" stroke-width="1" stroke-linejoin="round"/></g></svg>
<svg style="position:absolute;left:336px;top:341px" width="18" height="18"><g transform="translate(0,0.35)"><path d="M3.7,4.8 L8.2,4.8 Q8.8,2.7 9.8,2.7 L15.8,2.7 Q16.4,3 16.1,4.2 L15,9 L13.9,14.2 Q13.4,16.3 12.7,16.2 Q11.7,16 11.8,14.2 L12,11.6 Q11.8,10 10.5,10 Q8.6,10 8,11 L2.8,11 Z" fill="#fff" stroke="#9cc0ff" stroke-width="1" stroke-linejoin="round"/></g></svg>
<div class="t" style="top:345px;font-size:11px;line-height:11px;color:#000;left:364px;">15.</div>
<div class="t" style="top:345px;font-size:11px;line-height:11px;color:#000;left:390px;">address_list_original.xlsx#Exercise</div>
<div class="t" style="top:345px;font-size:11px;line-height:11px;color:#228822;right:997px;">117</div>
<div class="t" style="top:345px;font-size:11px;line-height:11px;color:#000;left:668px;">Schneider-Weber</div>
<div class="t" style="top:345px;font-size:11px;line-height:11px;color:#000;left:770px;">Marianne</div>
<div class="t" style="top:345px;font-size:11px;line-height:11px;color:#228822;left:858px;">1972-08-28T23:00:00Z</div>
<div class="t" style="top:345px;font-size:11px;line-height:11px;color:#000;left:1048px;">CH</div>
<div class="t" style="top:345px;font-size:11px;line-height:11px;color:#000;left:1097px;">F</div>
<div class="t" style="top:345px;font-size:11px;line-height:11px;color:#000;left:1170px;">ZH</div>
<div class="t" style="top:345px;font-size:11px;line-height:11px;color:#000;left:1240px;">Bahnhofstr. 13</div>
<div class="t" style="top:345px;font-size:11px;line-height:11px;color:#228822;right:233px;">8001</div>
<div class="t" style="top:345px;font-size:11px;line-height:11px;color:#000;left:1432px;">Zürich</div>
<div class="t" style="top:345px;font-size:11px;line-height:11px;color:#000;left:1553px;">CH</div>
<div class="r" style="left:305px;top:382px;width:1349px;height:1px;background:repeating-linear-gradient(90deg,#e0e0e0 0 1px,transparent 1px 2px);"></div>
<svg style="position:absolute;left:311px;top:362px" width="15" height="17"><g transform="translate(0,0.76)"><polygon points="7,2.0 8.3,6.4 13.4,6.8 9.7,9.7 11.2,14.6 7,11.8 2.8,14.6 4.3,9.7 0.6,6.8 5.7,6.4" fill="#fff" stroke="#9cc0ff" stroke-width="1" stroke-linejoin="round"/></g></svg>
<svg style="position:absolute;left:336px;top:362px" width="18" height="18"><g transform="translate(0,0.46)"><path d="M3.7,4.8 L8.2,4.8 Q8.8,2.7 9.8,2.7 L15.8,2.7 Q16.4,3 16.1,4.2 L15,9 L13.9,14.2 Q13.4,16.3 12.7,16.2 Q11.7,16 11.8,14.2 L12,11.6 Q11.8,10 10.5,10 Q8.6,10 8,11 L2.8,11 Z" fill="#fff" stroke="#9cc0ff" stroke-width="1" stroke-linejoin="round"/></g></svg>
<div class="t" style="top:366px;font-size:11px;line-height:11px;color:#000;left:364px;">17.</div>
<div class="t" style="top:366px;font-size:11px;line-height:11px;color:#000;left:390px;">address_list_original.xlsx#Exercise</div>
<div class="t" style="top:366px;font-size:11px;line-height:11px;color:#228822;right:997px;">119</div>
<div class="t" style="top:366px;font-size:11px;line-height:11px;color:#000;left:668px;">Casanova</div>
<div class="t" style="top:366px;font-size:11px;line-height:11px;color:#000;left:770px;">Antonio</div>
<div class="t" style="top:366px;font-size:11px;line-height:11px;color:#228822;left:858px;">1970-06-28T23:00:00Z</div>
<div class="t" style="top:366px;font-size:11px;line-height:11px;color:#000;left:1048px;">I</div>
<div class="t" style="top:366px;font-size:11px;line-height:11px;color:#000;left:1097px;">M</div>
<div class="t" style="top:366px;font-size:11px;line-height:11px;color:#000;left:1170px;">ZH</div>
<div class="t" style="top:366px;font-size:11px;line-height:11px;color:#000;left:1240px;">Berninastr. 67</div>
<div class="t" style="top:366px;font-size:11px;line-height:11px;color:#228822;right:233px;">8057</div>
<div class="t" style="top:366px;font-size:11px;line-height:11px;color:#000;left:1432px;">Zürich</div>
<div class="t" style="top:366px;font-size:11px;line-height:11px;color:#000;left:1553px;">CH</div>
<div class="r" style="left:305px;top:383px;width:1349px;height:21px;background:#f2f2f2;"></div>
<div class="r" style="left:305px;top:403px;width:1349px;height:1px;background:repeating-linear-gradient(90deg,#e0e0e0 0 1px,transparent 1px 2px);"></div>
<svg style="position:absolute;left:311px;top:383px" width="15" height="17"><g transform="translate(0,0.88)"><polygon points="7,2.0 8.3,6.4 13.4,6.8 9.7,9.7 11.2,14.6 7,11.8 2.8,14.6 4.3,9.7 0.6,6.8 5.7,6.4" fill="#fff" stroke="#9cc0ff" stroke-width="1" stroke-linejoin="round"/></g></svg>
<svg style="position:absolute;left:336px;top:383px" width="18" height="18"><g transform="translate(0,0.58)"><path d="M3.7,4.8 L8.2,4.8 Q8.8,2.7 9.8,2.7 L15.8,2.7 Q16.4,3 16.1,4.2 L15,9 L13.9,14.2 Q13.4,16.3 12.7,16.2 Q11.7,16 11.8,14.2 L12,11.6 Q11.8,10 10.5,10 Q8.6,10 8,11 L2.8,11 Z" fill="#fff" stroke="#9cc0ff" stroke-width="1" stroke-linejoin="round"/></g></svg>
<div class="t" style="top:387px;font-size:11px;line-height:11px;color:#000;left:364px;">18.</div>
<div class="t" style="top:387px;font-size:11px;line-height:11px;color:#000;left:390px;">address_list_original.xlsx#Exercise</div>
<div class="t" style="top:387px;font-size:11px;line-height:11px;color:#228822;right:997px;">120</div>
<div class="t" style="top:387px;font-size:11px;line-height:11px;color:#000;left:668px;">Maurer</div>
<div class="t" style="top:387px;font-size:11px;line-height:11px;color:#000;left:770px;">Elisabeth</div>
<div class="t" style="top:387px;font-size:11px;line-height:11px;color:#000;left:858px;">Fri Jul 16 00:00:00 CEST 1982</div>
<div class="t" style="top:387px;font-size:11px;line-height:11px;color:#000;left:1048px;">CH</div>
<div class="t" style="top:387px;font-size:11px;line-height:11px;color:#000;left:1097px;">F</div>
<div class="t" style="top:387px;font-size:11px;line-height:11px;color:#000;left:1170px;">ZH</div>
<div class="t" style="top:387px;font-size:11px;line-height:11px;color:#000;left:1240px;">Brunnengasse 8</div>
<div class="t" style="top:387px;font-size:11px;line-height:11px;color:#228822;right:233px;">8400</div>
<div class="t" style="top:387px;font-size:11px;line-height:11px;color:#000;left:1432px;">Winterthur</div>
<div class="t" style="top:387px;font-size:11px;line-height:11px;color:#000;left:1553px;">CH</div>
<div class="r" style="left:305px;top:424px;width:1349px;height:1px;background:repeating-linear-gradient(90deg,#e0e0e0 0 1px,transparent 1px 2px);"></div>
<svg style="position:absolute;left:311px;top:404px" width="15" height="17"><g transform="translate(0,1.00)"><polygon points="7,2.0 8.3,6.4 13.4,6.8 9.7,9.7 11.2,14.6 7,11.8 2.8,14.6 4.3,9.7 0.6,6.8 5.7,6.4" fill="#fff" stroke="#9cc0ff" stroke-width="1" stroke-linejoin="round"/></g></svg>
<svg style="position:absolute;left:336px;top:404px" width="18" height="18"><g transform="translate(0,0.69)"><path d="M3.7,4.8 L8.2,4.8 Q8.8,2.7 9.8,2.7 L15.8,2.7 Q16.4,3 16.1,4.2 L15,9 L13.9,14.2 Q13.4,16.3 12.7,16.2 Q11.7,16 11.8,14.2 L12,11.6 Q11.8,10 10.5,10 Q8.6,10 8,11 L2.8,11 Z" fill="#fff" stroke="#9cc0ff" stroke-width="1" stroke-linejoin="round"/></g></svg>
<div class="t" style="top:408px;font-size:11px;line-height:11px;color:#000;left:364px;">19.</div>
<div class="t" style="top:408px;font-size:11px;line-height:11px;color:#000;left:390px;">address_list_original.xlsx#Exercise</div>
<div class="t" style="top:408px;font-size:11px;line-height:11px;color:#228822;right:997px;">121</div>
<div class="t" style="top:408px;font-size:11px;line-height:11px;color:#000;left:668px;">Walder</div>
<div class="t" style="top:408px;font-size:11px;line-height:11px;color:#000;left:770px;">Karl</div>
<div class="t" style="top:408px;font-size:11px;line-height:11px;color:#228822;left:858px;">1979-03-01T23:00:00Z</div>
<div class="t" style="top:408px;font-size:11px;line-height:11px;color:#000;left:1048px;">CH</div>
<div class="t" style="top:408px;font-size:11px;line-height:11px;color:#000;left:1097px;">M</div>
<div class="t" style="top:408px;font-size:11px;line-height:11px;color:#000;left:1170px;">ZH</div>
<div class="t" style="top:408px;font-size:11px;line-height:11px;color:#000;left:1240px;">Zeltweg 12</div>
<div class="t" style="top:408px;font-size:11px;line-height:11px;color:#228822;right:233px;">8610</div>
<div class="t" style="top:408px;font-size:11px;line-height:11px;color:#000;left:1432px;">Uster</div>
<div class="t" style="top:408px;font-size:11px;line-height:11px;color:#000;left:1553px;">CH</div>
<div class="r" style="left:305px;top:425px;width:1349px;height:22px;background:#f2f2f2;"></div>
<div class="r" style="left:305px;top:446px;width:1349px;height:1px;background:repeating-linear-gradient(90deg,#e0e0e0 0 1px,transparent 1px 2px);"></div>
<svg style="position:absolute;left:311px;top:426px" width="15" height="17"><g transform="translate(0,0.11)"><polygon points="7,2.0 8.3,6.4 13.4,6.8 9.7,9.7 11.2,14.6 7,11.8 2.8,14.6 4.3,9.7 0.6,6.8 5.7,6.4" fill="#fff" stroke="#9cc0ff" stroke-width="1" stroke-linejoin="round"/></g></svg>
<svg style="position:absolute;left:336px;top:425px" width="18" height="18"><g transform="translate(0,0.81)"><path d="M3.7,4.8 L8.2,4.8 Q8.8,2.7 9.8,2.7 L15.8,2.7 Q16.4,3 16.1,4.2 L15,9 L13.9,14.2 Q13.4,16.3 12.7,16.2 Q11.7,16 11.8,14.2 L12,11.6 Q11.8,10 10.5,10 Q8.6,10 8,11 L2.8,11 Z" fill="#fff" stroke="#9cc0ff" stroke-width="1" stroke-linejoin="round"/></g></svg>
<div class="t" style="top:429px;font-size:11px;line-height:11px;color:#000;left:364px;">63.</div>
<div class="t" style="top:429px;font-size:11px;line-height:11px;color:#000;left:390px;">address_list_scrambled.xlsx#Exercise</div>
<div class="t" style="top:429px;font-size:11px;line-height:11px;color:#000;left:668px;">Ragginger</div>
<div class="t" style="top:429px;font-size:11px;line-height:11px;color:#000;left:770px;">Jean-Pierre</div>
<div class="t" style="top:429px;font-size:11px;line-height:11px;color:#228822;left:858px;">1983-09-28T23:00:00Z</div>
<div class="t" style="top:429px;font-size:11px;line-height:11px;color:#000;left:1048px;">CH</div>
<div class="t" style="top:429px;font-size:11px;line-height:11px;color:#000;left:1097px;">M</div>
<div class="t" style="top:429px;font-size:11px;line-height:11px;color:#000;left:1170px;">ZH</div>
<div class="t" style="top:429px;font-size:11px;line-height:11px;color:#000;left:1240px;">Saatlenzelg 24</div>
<div class="t" style="top:429px;font-size:11px;line-height:11px;color:#228822;right:233px;">8050</div>
<div class="t" style="top:429px;font-size:11px;line-height:11px;color:#000;left:1432px;">Zürich</div>
<div class="t" style="top:429px;font-size:11px;line-height:11px;color:#000;left:1553px;">CH</div>
<div class="r" style="left:305px;top:467px;width:1349px;height:1px;background:repeating-linear-gradient(90deg,#e0e0e0 0 1px,transparent 1px 2px);"></div>
<svg style="position:absolute;left:311px;top:447px" width="15" height="17"><g transform="translate(0,0.22)"><polygon points="7,2.0 8.3,6.4 13.4,6.8 9.7,9.7 11.2,14.6 7,11.8 2.8,14.6 4.3,9.7 0.6,6.8 5.7,6.4" fill="#fff" stroke="#9cc0ff" stroke-width="1" stroke-linejoin="round"/></g></svg>
<svg style="position:absolute;left:336px;top:446px" width="18" height="18"><g transform="translate(0,0.92)"><path d="M3.7,4.8 L8.2,4.8 Q8.8,2.7 9.8,2.7 L15.8,2.7 Q16.4,3 16.1,4.2 L15,9 L13.9,14.2 Q13.4,16.3 12.7,16.2 Q11.7,16 11.8,14.2 L12,11.6 Q11.8,10 10.5,10 Q8.6,10 8,11 L2.8,11 Z" fill="#fff" stroke="#9cc0ff" stroke-width="1" stroke-linejoin="round"/></g></svg>
<div class="t" style="top:450px;font-size:11px;line-height:11px;color:#000;left:364px;">66.</div>
<div class="t" style="top:450px;font-size:11px;line-height:11px;color:#000;left:390px;">address_list_scrambled.xlsx#Exercise</div>
<div class="t" style="top:450px;font-size:11px;line-height:11px;color:#000;left:668px;">Fillinger</div>
<div class="t" style="top:450px;font-size:11px;line-height:11px;color:#000;left:770px;">Claude</div>
<div class="t" style="top:450px;font-size:11px;line-height:11px;color:#228822;left:858px;">1975-07-20T23:00:00Z</div>
<div class="t" style="top:450px;font-size:11px;line-height:11px;color:#000;left:1048px;">F</div>
<div class="t" style="top:450px;font-size:11px;line-height:11px;color:#000;left:1097px;">M</div>
<div class="t" style="top:450px;font-size:11px;line-height:11px;color:#000;left:1170px;">FR</div>
<div class="t" style="top:450px;font-size:11px;line-height:11px;color:#000;left:1240px;">Zürichstrasse 42</div>
<div class="t" style="top:450px;font-size:11px;line-height:11px;color:#228822;right:233px;">1644</div>
<div class="t" style="top:450px;font-size:11px;line-height:11px;color:#000;left:1432px;">Avry-devant-Pont</div>
<div class="t" style="top:450px;font-size:11px;line-height:11px;color:#000;left:1553px;">FR</div>
<div class="r" style="left:305px;top:468px;width:1349px;height:21px;background:#f2f2f2;"></div>
<div class="r" style="left:305px;top:488px;width:1349px;height:1px;background:repeating-linear-gradient(90deg,#e0e0e0 0 1px,transparent 1px 2px);"></div>
<svg style="position:absolute;left:311px;top:468px" width="15" height="17"><g transform="translate(0,0.34)"><polygon points="7,2.0 8.3,6.4 13.4,6.8 9.7,9.7 11.2,14.6 7,11.8 2.8,14.6 4.3,9.7 0.6,6.8 5.7,6.4" fill="#fff" stroke="#9cc0ff" stroke-width="1" stroke-linejoin="round"/></g></svg>
<svg style="position:absolute;left:336px;top:468px" width="18" height="18"><g transform="translate(0,0.04)"><path d="M3.7,4.8 L8.2,4.8 Q8.8,2.7 9.8,2.7 L15.8,2.7 Q16.4,3 16.1,4.2 L15,9 L13.9,14.2 Q13.4,16.3 12.7,16.2 Q11.7,16 11.8,14.2 L12,11.6 Q11.8,10 10.5,10 Q8.6,10 8,11 L2.8,11 Z" fill="#fff" stroke="#9cc0ff" stroke-width="1" stroke-linejoin="round"/></g></svg>
<div class="t" style="top:471px;font-size:11px;line-height:11px;color:#000;left:364px;">67.</div>
<div class="t" style="top:471px;font-size:11px;line-height:11px;color:#000;left:390px;">address_list_scrambled.xlsx#Exercise</div>
<div class="t" style="top:471px;font-size:11px;line-height:11px;color:#000;left:668px;">Baillie</div>
<div class="t" style="top:471px;font-size:11px;line-height:11px;color:#000;left:770px;">Marianne</div>
<div class="t" style="top:471px;font-size:11px;line-height:11px;color:#000;left:858px;">Mon Aug 11 00:00:00 CEST 1980</div>
<div class="t" style="top:471px;font-size:11px;line-height:11px;color:#000;left:1048px;">F</div>
<div class="t" style="top:471px;font-size:11px;line-height:11px;color:#000;left:1097px;">F</div>
<div class="t" style="top:471px;font-size:11px;line-height:11px;color:#000;left:1170px;">TG</div>
<div class="t" style="top:471px;font-size:11px;line-height:11px;color:#000;left:1240px;">Zielweg 5</div>
<div class="t" style="top:471px;font-size:11px;line-height:11px;color:#228822;right:233px;">8580</div>
<div class="t" style="top:471px;font-size:11px;line-height:11px;color:#000;left:1432px;">Amriswil</div>
<div class="t" style="top:471px;font-size:11px;line-height:11px;color:#000;left:1553px;">CH</div>
<div class="r" style="left:305px;top:509px;width:1349px;height:1px;background:repeating-linear-gradient(90deg,#e0e0e0 0 1px,transparent 1px 2px);"></div>
<svg style="position:absolute;left:311px;top:489px" width="15" height="17"><g transform="translate(0,0.45)"><polygon points="7,2.0 8.3,6.4 13.4,6.8 9.7,9.7 11.2,14.6 7,11.8 2.8,14.6 4.3,9.7 0.6,6.8 5.7,6.4" fill="#fff" stroke="#9cc0ff" stroke-width="1" stroke-linejoin="round"/></g></svg>
<svg style="position:absolute;left:336px;top:489px" width="18" height="18"><g transform="translate(0,0.15)"><path d="M3.7,4.8 L8.2,4.8 Q8.8,2.7 9.8,2.7 L15.8,2.7 Q16.4,3 16.1,4.2 L15,9 L13.9,14.2 Q13.4,16.3 12.7,16.2 Q11.7,16 11.8,14.2 L12,11.6 Q11.8,10 10.5,10 Q8.6,10 8,11 L2.8,11 Z" fill="#fff" stroke="#9cc0ff" stroke-width="1" stroke-linejoin="round"/></g></svg>
<div class="t" style="top:492px;font-size:11px;line-height:11px;color:#000;left:364px;">68.</div>
<div class="t" style="top:492px;font-size:11px;line-height:11px;color:#000;left:390px;">address_list_scrambled.xlsx#Exercise</div>
<div class="t" style="top:492px;font-size:11px;line-height:11px;color:#000;left:668px;">Isler</div>
<div class="t" style="top:492px;font-size:11px;line-height:11px;color:#000;left:770px;">Ruth</div>
<div class="t" style="top:492px;font-size:11px;line-height:11px;color:#228822;left:858px;">1979-11-20T23:00:00Z</div>
<div class="t" style="top:492px;font-size:11px;line-height:11px;color:#000;left:1048px;">CH</div>
<div class="t" style="top:492px;font-size:11px;line-height:11px;color:#000;left:1097px;">F</div>
<div class="t" style="top:492px;font-size:11px;line-height:11px;color:#000;left:1170px;">ZH</div>
<div class="t" style="top:492px;font-size:11px;line-height:11px;color:#000;left:1240px;">Weihermattstrasse 48</div>
<div class="t" style="top:492px;font-size:11px;line-height:11px;color:#228822;right:233px;">8902</div>
<div class="t" style="top:492px;font-size:11px;line-height:11px;color:#000;left:1432px;">Urdorf</div>
<div class="t" style="top:492px;font-size:11px;line-height:11px;color:#000;left:1553px;">CH</div>
<div class="r" style="left:305px;top:510px;width:1349px;height:21px;background:#f2f2f2;"></div>
<div class="r" style="left:305px;top:530px;width:1349px;height:1px;background:repeating-linear-gradient(90deg,#e0e0e0 0 1px,transparent 1px 2px);"></div>
<svg style="position:absolute;left:311px;top:510px" width="15" height="17"><g transform="translate(0,0.57)"><polygon points="7,2.0 8.3,6.4 13.4,6.8 9.7,9.7 11.2,14.6 7,11.8 2.8,14.6 4.3,9.7 0.6,6.8 5.7,6.4" fill="#fff" stroke="#9cc0ff" stroke-width="1" stroke-linejoin="round"/></g></svg>
<svg style="position:absolute;left:336px;top:510px" width="18" height="18"><g transform="translate(0,0.27)"><path d="M3.7,4.8 L8.2,4.8 Q8.8,2.7 9.8,2.7 L15.8,2.7 Q16.4,3 16.1,4.2 L15,9 L13.9,14.2 Q13.4,16.3 12.7,16.2 Q11.7,16 11.8,14.2 L12,11.6 Q11.8,10 10.5,10 Q8.6,10 8,11 L2.8,11 Z" fill="#fff" stroke="#9cc0ff" stroke-width="1" stroke-linejoin="round"/></g></svg>
<div class="t" style="top:514px;font-size:11px;line-height:11px;color:#000;left:364px;">69.</div>
<div class="t" style="top:514px;font-size:11px;line-height:11px;color:#000;left:390px;">address_list_scrambled.xlsx#Exercise</div>
<div class="t" style="top:514px;font-size:11px;line-height:11px;color:#000;left:668px;">Vlassidis</div>
<div class="t" style="top:514px;font-size:11px;line-height:11px;color:#000;left:770px;">Stamatis</div>
<div class="t" style="top:514px;font-size:11px;line-height:11px;color:#228822;left:858px;">1970-12-21T23:00:00Z</div>
<div class="t" style="top:514px;font-size:11px;line-height:11px;color:#000;left:1048px;">GR</div>
<div class="t" style="top:514px;font-size:11px;line-height:11px;color:#000;left:1097px;">M</div>
<div class="t" style="top:514px;font-size:11px;line-height:11px;color:#000;left:1170px;">ZH</div>
<div class="t" style="top:514px;font-size:11px;line-height:11px;color:#000;left:1240px;">Brunnacherstr. 34</div>
<div class="t" style="top:514px;font-size:11px;line-height:11px;color:#228822;right:233px;">8174</div>
<div class="t" style="top:514px;font-size:11px;line-height:11px;color:#000;left:1432px;">Stadel b. Niederglatt</div>
<div class="t" style="top:514px;font-size:11px;line-height:11px;color:#000;left:1553px;">CH</div>
<div class="r" style="left:305px;top:551px;width:1349px;height:1px;background:repeating-linear-gradient(90deg,#e0e0e0 0 1px,transparent 1px 2px);"></div>
<svg style="position:absolute;left:311px;top:531px" width="15" height="17"><g transform="translate(0,0.68)"><polygon points="7,2.0 8.3,6.4 13.4,6.8 9.7,9.7 11.2,14.6 7,11.8 2.8,14.6 4.3,9.7 0.6,6.8 5.7,6.4" fill="#fff" stroke="#9cc0ff" stroke-width="1" stroke-linejoin="round"/></g></svg>
<svg style="position:absolute;left:336px;top:531px" width="18" height="18"><g transform="translate(0,0.38)"><path d="M3.7,4.8 L8.2,4.8 Q8.8,2.7 9.8,2.7 L15.8,2.7 Q16.4,3 16.1,4.2 L15,9 L13.9,14.2 Q13.4,16.3 12.7,16.2 Q11.7,16 11.8,14.2 L12,11.6 Q11.8,10 10.5,10 Q8.6,10 8,11 L2.8,11 Z" fill="#fff" stroke="#9cc0ff" stroke-width="1" stroke-linejoin="round"/></g></svg>
<div class="t" style="top:535px;font-size:11px;line-height:11px;color:#000;left:364px;">70.</div>
<div class="t" style="top:535px;font-size:11px;line-height:11px;color:#000;left:390px;">address_list_scrambled.xlsx#Exercise</div>
<div class="t" style="top:535px;font-size:11px;line-height:11px;color:#000;left:668px;">Ambühler</div>
<div class="t" style="top:535px;font-size:11px;line-height:11px;color:#000;left:770px;">Urs</div>
<div class="t" style="top:535px;font-size:11px;line-height:11px;color:#228822;left:858px;">1977-07-28T22:00:00Z</div>
<div class="t" style="top:535px;font-size:11px;line-height:11px;color:#000;left:1048px;">CH</div>
<div class="t" style="top:535px;font-size:11px;line-height:11px;color:#000;left:1097px;">M</div>
<div class="t" style="top:535px;font-size:11px;line-height:11px;color:#000;left:1170px;">ZH</div>
<div class="t" style="top:535px;font-size:11px;line-height:11px;color:#000;left:1240px;">Gerechtigkeitsgasse 4</div>
<div class="t" style="top:535px;font-size:11px;line-height:11px;color:#228822;right:233px;">8002</div>
<div class="t" style="top:535px;font-size:11px;line-height:11px;color:#000;left:1432px;">Zürich</div>
<div class="t" style="top:535px;font-size:11px;line-height:11px;color:#000;left:1553px;">CH</div>
<div class="r" style="left:305px;top:552px;width:1349px;height:21px;background:#f2f2f2;"></div>
<div class="r" style="left:305px;top:572px;width:1349px;height:1px;background:repeating-linear-gradient(90deg,#e0e0e0 0 1px,transparent 1px 2px);"></div>
<svg style="position:absolute;left:311px;top:552px" width="15" height="17"><g transform="translate(0,0.80)"><polygon points="7,2.0 8.3,6.4 13.4,6.8 9.7,9.7 11.2,14.6 7,11.8 2.8,14.6 4.3,9.7 0.6,6.8 5.7,6.4" fill="#fff" stroke="#9cc0ff" stroke-width="1" stroke-linejoin="round"/></g></svg>
<svg style="position:absolute;left:336px;top:552px" width="18" height="18"><g transform="translate(0,0.50)"><path d="M3.7,4.8 L8.2,4.8 Q8.8,2.7 9.8,2.7 L15.8,2.7 Q16.4,3 16.1,4.2 L15,9 L13.9,14.2 Q13.4,16.3 12.7,16.2 Q11.7,16 11.8,14.2 L12,11.6 Q11.8,10 10.5,10 Q8.6,10 8,11 L2.8,11 Z" fill="#fff" stroke="#9cc0ff" stroke-width="1" stroke-linejoin="round"/></g></svg>
<div class="t" style="top:556px;font-size:11px;line-height:11px;color:#000;left:364px;">71.</div>
<div class="t" style="top:556px;font-size:11px;line-height:11px;color:#000;left:390px;">address_list_scrambled.xlsx#Exercise</div>
<div class="t" style="top:556px;font-size:11px;line-height:11px;color:#000;left:668px;">Kellenberger</div>
<div class="t" style="top:556px;font-size:11px;line-height:11px;color:#000;left:770px;">Kurt</div>
<div class="t" style="top:556px;font-size:11px;line-height:11px;color:#228822;left:858px;">1969-07-11T23:00:00Z</div>
<div class="t" style="top:556px;font-size:11px;line-height:11px;color:#000;left:1048px;">CH</div>
<div class="t" style="top:556px;font-size:11px;line-height:11px;color:#000;left:1097px;">M</div>
<div class="t" style="top:556px;font-size:11px;line-height:11px;color:#000;left:1170px;">ZH</div>
<div class="t" style="top:556px;font-size:11px;line-height:11px;color:#000;left:1240px;">Georgsstrasse 19</div>
<div class="t" style="top:556px;font-size:11px;line-height:11px;color:#228822;right:233px;">8055</div>
<div class="t" style="top:556px;font-size:11px;line-height:11px;color:#000;left:1432px;">Zürich</div>
<div class="t" style="top:556px;font-size:11px;line-height:11px;color:#000;left:1553px;">CH</div>
<div class="r" style="left:305px;top:593px;width:1349px;height:1px;background:repeating-linear-gradient(90deg,#e0e0e0 0 1px,transparent 1px 2px);"></div>
<svg style="position:absolute;left:311px;top:573px" width="15" height="17"><g transform="translate(0,0.91)"><polygon points="7,2.0 8.3,6.4 13.4,6.8 9.7,9.7 11.2,14.6 7,11.8 2.8,14.6 4.3,9.7 0.6,6.8 5.7,6.4" fill="#fff" stroke="#9cc0ff" stroke-width="1" stroke-linejoin="round"/></g></svg>
<svg style="position:absolute;left:336px;top:573px" width="18" height="18"><g transform="translate(0,0.62)"><path d="M3.7,4.8 L8.2,4.8 Q8.8,2.7 9.8,2.7 L15.8,2.7 Q16.4,3 16.1,4.2 L15,9 L13.9,14.2 Q13.4,16.3 12.7,16.2 Q11.7,16 11.8,14.2 L12,11.6 Q11.8,10 10.5,10 Q8.6,10 8,11 L2.8,11 Z" fill="#fff" stroke="#9cc0ff" stroke-width="1" stroke-linejoin="round"/></g></svg>
<div class="t" style="top:577px;font-size:11px;line-height:11px;color:#000;left:364px;">73.</div>
<div class="t" style="top:577px;font-size:11px;line-height:11px;color:#000;left:390px;">address_list_scrambled.xlsx#Exercise</div>
<div class="t" style="top:577px;font-size:11px;line-height:11px;color:#000;left:668px;">Kopf</div>
<div class="t" style="top:577px;font-size:11px;line-height:11px;color:#000;left:770px;">Andreas</div>
<div class="t" style="top:577px;font-size:11px;line-height:11px;color:#228822;left:858px;">1981-02-02T23:00:00Z</div>
<div class="t" style="top:577px;font-size:11px;line-height:11px;color:#000;left:1048px;">CH</div>
<div class="t" style="top:577px;font-size:11px;line-height:11px;color:#000;left:1097px;">M</div>
<div class="t" style="top:577px;font-size:11px;line-height:11px;color:#000;left:1170px;">ZH</div>
<div class="t" style="top:577px;font-size:11px;line-height:11px;color:#000;left:1240px;">Soodring 19/20</div>
<div class="t" style="top:577px;font-size:11px;line-height:11px;color:#228822;right:233px;">8134</div>
<div class="t" style="top:577px;font-size:11px;line-height:11px;color:#000;left:1432px;">Adliswil</div>
<div class="t" style="top:577px;font-size:11px;line-height:11px;color:#000;left:1553px;">CH</div>
<div class="r" style="left:305px;top:594px;width:1349px;height:22px;background:#f2f2f2;"></div>
<div class="r" style="left:305px;top:615px;width:1349px;height:1px;background:repeating-linear-gradient(90deg,#e0e0e0 0 1px,transparent 1px 2px);"></div>
<svg style="position:absolute;left:311px;top:595px" width="15" height="17"><g transform="translate(0,0.03)"><polygon points="7,2.0 8.3,6.4 13.4,6.8 9.7,9.7 11.2,14.6 7,11.8 2.8,14.6 4.3,9.7 0.6,6.8 5.7,6.4" fill="#fff" stroke="#9cc0ff" stroke-width="1" stroke-linejoin="round"/></g></svg>
<svg style="position:absolute;left:336px;top:594px" width="18" height="18"><g transform="translate(0,0.73)"><path d="M3.7,4.8 L8.2,4.8 Q8.8,2.7 9.8,2.7 L15.8,2.7 Q16.4,3 16.1,4.2 L15,9 L13.9,14.2 Q13.4,16.3 12.7,16.2 Q11.7,16 11.8,14.2 L12,11.6 Q11.8,10 10.5,10 Q8.6,10 8,11 L2.8,11 Z" fill="#fff" stroke="#9cc0ff" stroke-width="1" stroke-linejoin="round"/></g></svg>
<div class="t" style="top:598px;font-size:11px;line-height:11px;color:#000;left:364px;">74.</div>
<div class="t" style="top:598px;font-size:11px;line-height:11px;color:#000;left:390px;">address_list_scrambled.xlsx#Exercise</div>
<div class="t" style="top:598px;font-size:11px;line-height:11px;color:#000;left:668px;">Wüger</div>
<div class="t" style="top:598px;font-size:11px;line-height:11px;color:#000;left:770px;">Heinrich</div>
<div class="t" style="top:598px;font-size:11px;line-height:11px;color:#228822;left:858px;">1977-09-19T22:00:00Z</div>
<div class="t" style="top:598px;font-size:11px;line-height:11px;color:#000;left:1048px;">CH</div>
<div class="t" style="top:598px;font-size:11px;line-height:11px;color:#000;left:1097px;">M</div>
<div class="t" style="top:598px;font-size:11px;line-height:11px;color:#000;left:1170px;">AG</div>
<div class="t" style="top:598px;font-size:11px;line-height:11px;color:#000;left:1240px;">Alte Hägglingerstr. 10</div>
<div class="t" style="top:598px;font-size:11px;line-height:11px;color:#228822;right:233px;">5605</div>
<div class="t" style="top:598px;font-size:11px;line-height:11px;color:#000;left:1432px;">Dottikon</div>
<div class="t" style="top:598px;font-size:11px;line-height:11px;color:#000;left:1553px;">CH</div>
<div class="r" style="left:305px;top:636px;width:1349px;height:1px;background:repeating-linear-gradient(90deg,#e0e0e0 0 1px,transparent 1px 2px);"></div>
<svg style="position:absolute;left:311px;top:616px" width="15" height="17"><g transform="translate(0,0.14)"><polygon points="7,2.0 8.3,6.4 13.4,6.8 9.7,9.7 11.2,14.6 7,11.8 2.8,14.6 4.3,9.7 0.6,6.8 5.7,6.4" fill="#fff" stroke="#9cc0ff" stroke-width="1" stroke-linejoin="round"/></g></svg>
<svg style="position:absolute;left:336px;top:615px" width="18" height="18"><g transform="translate(0,0.85)"><path d="M3.7,4.8 L8.2,4.8 Q8.8,2.7 9.8,2.7 L15.8,2.7 Q16.4,3 16.1,4.2 L15,9 L13.9,14.2 Q13.4,16.3 12.7,16.2 Q11.7,16 11.8,14.2 L12,11.6 Q11.8,10 10.5,10 Q8.6,10 8,11 L2.8,11 Z" fill="#fff" stroke="#9cc0ff" stroke-width="1" stroke-linejoin="round"/></g></svg>
<div class="t" style="top:619px;font-size:11px;line-height:11px;color:#000;left:364px;">75.</div>
<div class="t" style="top:619px;font-size:11px;line-height:11px;color:#000;left:390px;">address_list_scrambled.xlsx#Exercise</div>
<div class="t" style="top:619px;font-size:11px;line-height:11px;color:#000;left:668px;">Hutter</div>
<div class="t" style="top:619px;font-size:11px;line-height:11px;color:#000;left:770px;">Julien</div>
<div class="t" style="top:619px;font-size:11px;line-height:11px;color:#228822;left:858px;">1974-05-28T23:00:00Z</div>
<div class="t" style="top:619px;font-size:11px;line-height:11px;color:#000;left:1048px;">CH</div>
<div class="t" style="top:619px;font-size:11px;line-height:11px;color:#000;left:1097px;">M</div>
<div class="t" style="top:619px;font-size:11px;line-height:11px;color:#000;left:1170px;">AG</div>
<div class="t" style="top:619px;font-size:11px;line-height:11px;color:#000;left:1240px;">Dorfstr. 48</div>
<div class="t" style="top:619px;font-size:11px;line-height:11px;color:#228822;right:233px;">5040</div>
<div class="t" style="top:619px;font-size:11px;line-height:11px;color:#000;left:1432px;">Schöftland</div>
<div class="t" style="top:619px;font-size:11px;line-height:11px;color:#000;left:1553px;">CH</div>
<div class="r" style="left:305px;top:637px;width:1349px;height:21px;background:#f2f2f2;"></div>
<div class="r" style="left:305px;top:657px;width:1349px;height:1px;background:repeating-linear-gradient(90deg,#e0e0e0 0 1px,transparent 1px 2px);"></div>
<svg style="position:absolute;left:311px;top:637px" width="15" height="17"><g transform="translate(0,0.26)"><polygon points="7,2.0 8.3,6.4 13.4,6.8 9.7,9.7 11.2,14.6 7,11.8 2.8,14.6 4.3,9.7 0.6,6.8 5.7,6.4" fill="#fff" stroke="#9cc0ff" stroke-width="1" stroke-linejoin="round"/></g></svg>
<svg style="position:absolute;left:336px;top:636px" width="18" height="18"><g transform="translate(0,0.96)"><path d="M3.7,4.8 L8.2,4.8 Q8.8,2.7 9.8,2.7 L15.8,2.7 Q16.4,3 16.1,4.2 L15,9 L13.9,14.2 Q13.4,16.3 12.7,16.2 Q11.7,16 11.8,14.2 L12,11.6 Q11.8,10 10.5,10 Q8.6,10 8,11 L2.8,11 Z" fill="#fff" stroke="#9cc0ff" stroke-width="1" stroke-linejoin="round"/></g></svg>
<div class="t" style="top:640px;font-size:11px;line-height:11px;color:#000;left:364px;">76.</div>
<div class="t" style="top:640px;font-size:11px;line-height:11px;color:#000;left:390px;">address_list_scrambled.xlsx#Exercise</div>
<div class="t" style="top:640px;font-size:11px;line-height:11px;color:#000;left:668px;">Schneider-Weber</div>
<div class="t" style="top:640px;font-size:11px;line-height:11px;color:#000;left:770px;">Marianne</div>
<div class="t" style="top:640px;font-size:11px;line-height:11px;color:#228822;left:858px;">1972-08-28T23:00:00Z</div>
<div class="t" style="top:640px;font-size:11px;line-height:11px;color:#000;left:1048px;">CH</div>
<div class="t" style="top:640px;font-size:11px;line-height:11px;color:#000;left:1097px;">F</div>
<div class="t" style="top:640px;font-size:11px;line-height:11px;color:#000;left:1170px;">ZH</div>
<div class="t" style="top:640px;font-size:11px;line-height:11px;color:#000;left:1240px;">Bahnhofstr. 13</div>
<div class="t" style="top:640px;font-size:11px;line-height:11px;color:#228822;right:233px;">8001</div>
<div class="t" style="top:640px;font-size:11px;line-height:11px;color:#000;left:1432px;">Zürich</div>
<div class="t" style="top:640px;font-size:11px;line-height:11px;color:#000;left:1553px;">CH</div>
<div class="r" style="left:305px;top:678px;width:1349px;height:1px;background:repeating-linear-gradient(90deg,#e0e0e0 0 1px,transparent 1px 2px);"></div>
<svg style="position:absolute;left:311px;top:658px" width="15" height="17"><g transform="translate(0,0.38)"><polygon points="7,2.0 8.3,6.4 13.4,6.8 9.7,9.7 11.2,14.6 7,11.8 2.8,14.6 4.3,9.7 0.6,6.8 5.7,6.4" fill="#fff" stroke="#9cc0ff" stroke-width="1" stroke-linejoin="round"/></g></svg>
<svg style="position:absolute;left:336px;top:658px" width="18" height="18"><g transform="translate(0,0.08)"><path d="M3.7,4.8 L8.2,4.8 Q8.8,2.7 9.8,2.7 L15.8,2.7 Q16.4,3 16.1,4.2 L15,9 L13.9,14.2 Q13.4,16.3 12.7,16.2 Q11.7,16 11.8,14.2 L12,11.6 Q11.8,10 10.5,10 Q8.6,10 8,11 L2.8,11 Z" fill="#fff" stroke="#9cc0ff" stroke-width="1" stroke-linejoin="round"/></g></svg>
<div class="t" style="top:661px;font-size:11px;line-height:11px;color:#000;left:364px;">78.</div>
<div class="t" style="top:661px;font-size:11px;line-height:11px;color:#000;left:390px;">address_list_scrambled.xlsx#Exercise</div>
<div class="t" style="top:661px;font-size:11px;line-height:11px;color:#000;left:668px;">Casanova</div>
<div class="t" style="top:661px;font-size:11px;line-height:11px;color:#000;left:770px;">Antonio</div>
<div class="t" style="top:661px;font-size:11px;line-height:11px;color:#228822;left:858px;">1970-06-28T23:00:00Z</div>
<div class="t" style="top:661px;font-size:11px;line-height:11px;color:#000;left:1048px;">I</div>
<div class="t" style="top:661px;font-size:11px;line-height:11px;color:#000;left:1097px;">M</div>
<div class="t" style="top:661px;font-size:11px;line-height:11px;color:#000;left:1170px;">ZH</div>
<div class="t" style="top:661px;font-size:11px;line-height:11px;color:#000;left:1240px;">Berninastr. 67</div>
<div class="t" style="top:661px;font-size:11px;line-height:11px;color:#228822;right:233px;">8057</div>
<div class="t" style="top:661px;font-size:11px;line-height:11px;color:#000;left:1432px;">Zürich</div>
<div class="t" style="top:661px;font-size:11px;line-height:11px;color:#000;left:1553px;">CH</div>
<div class="r" style="left:305px;top:679px;width:1349px;height:21px;background:#f2f2f2;"></div>
<div class="r" style="left:305px;top:699px;width:1349px;height:1px;background:repeating-linear-gradient(90deg,#e0e0e0 0 1px,transparent 1px 2px);"></div>
<svg style="position:absolute;left:311px;top:679px" width="15" height="17"><g transform="translate(0,0.49)"><polygon points="7,2.0 8.3,6.4 13.4,6.8 9.7,9.7 11.2,14.6 7,11.8 2.8,14.6 4.3,9.7 0.6,6.8 5.7,6.4" fill="#fff" stroke="#9cc0ff" stroke-width="1" stroke-linejoin="round"/></g></svg>
<svg style="position:absolute;left:336px;top:679px" width="18" height="18"><g transform="translate(0,0.19)"><path d="M3.7,4.8 L8.2,4.8 Q8.8,2.7 9.8,2.7 L15.8,2.7 Q16.4,3 16.1,4.2 L15,9 L13.9,14.2 Q13.4,16.3 12.7,16.2 Q11.7,16 11.8,14.2 L12,11.6 Q11.8,10 10.5,10 Q8.6,10 8,11 L2.8,11 Z" fill="#fff" stroke="#9cc0ff" stroke-width="1" stroke-linejoin="round"/></g></svg>
<div class="t" style="top:682px;font-size:11px;line-height:11px;color:#000;left:364px;">79.</div>
<div class="t" style="top:682px;font-size:11px;line-height:11px;color:#000;left:390px;">address_list_scrambled.xlsx#Exercise</div>
<div class="t" style="top:682px;font-size:11px;line-height:11px;color:#000;left:668px;">Maurer</div>
<div class="t" style="top:682px;font-size:11px;line-height:11px;color:#000;left:770px;">Elisabeth</div>
<div class="t" style="top:682px;font-size:11px;line-height:11px;color:#000;left:858px;">Fri Jul 16 00:00:00 CEST 1982</div>
<div class="t" style="top:682px;font-size:11px;line-height:11px;color:#000;left:1048px;">CH</div>
<div class="t" style="top:682px;font-size:11px;line-height:11px;color:#000;left:1097px;">F</div>
<div class="t" style="top:682px;font-size:11px;line-height:11px;color:#000;left:1170px;">ZH</div>
<div class="t" style="top:682px;font-size:11px;line-height:11px;color:#000;left:1240px;">Brunnengasse 8</div>
<div class="t" style="top:682px;font-size:11px;line-height:11px;color:#228822;right:233px;">8400</div>
<div class="t" style="top:682px;font-size:11px;line-height:11px;color:#000;left:1432px;">Winterthur</div>
<div class="t" style="top:682px;font-size:11px;line-height:11px;color:#000;left:1553px;">CH</div>
<div class="r" style="left:305px;top:720px;width:1349px;height:1px;background:repeating-linear-gradient(90deg,#e0e0e0 0 1px,transparent 1px 2px);"></div>
<svg style="position:absolute;left:311px;top:700px" width="15" height="17"><g transform="translate(0,0.60)"><polygon points="7,2.0 8.3,6.4 13.4,6.8 9.7,9.7 11.2,14.6 7,11.8 2.8,14.6 4.3,9.7 0.6,6.8 5.7,6.4" fill="#fff" stroke="#9cc0ff" stroke-width="1" stroke-linejoin="round"/></g></svg>
<svg style="position:absolute;left:336px;top:700px" width="18" height="18"><g transform="translate(0,0.30)"><path d="M3.7,4.8 L8.2,4.8 Q8.8,2.7 9.8,2.7 L15.8,2.7 Q16.4,3 16.1,4.2 L15,9 L13.9,14.2 Q13.4,16.3 12.7,16.2 Q11.7,16 11.8,14.2 L12,11.6 Q11.8,10 10.5,10 Q8.6,10 8,11 L2.8,11 Z" fill="#fff" stroke="#9cc0ff" stroke-width="1" stroke-linejoin="round"/></g></svg>
<div class="t" style="top:704px;font-size:11px;line-height:11px;color:#000;left:364px;">80.</div>
<div class="t" style="top:704px;font-size:11px;line-height:11px;color:#000;left:390px;">address_list_scrambled.xlsx#Exercise</div>
<div class="t" style="top:704px;font-size:11px;line-height:11px;color:#000;left:668px;">Walder</div>
<div class="t" style="top:704px;font-size:11px;line-height:11px;color:#000;left:770px;">Karl</div>
<div class="t" style="top:704px;font-size:11px;line-height:11px;color:#228822;left:858px;">1979-03-01T23:00:00Z</div>
<div class="t" style="top:704px;font-size:11px;line-height:11px;color:#000;left:1048px;">CH</div>
<div class="t" style="top:704px;font-size:11px;line-height:11px;color:#000;left:1097px;">M</div>
<div class="t" style="top:704px;font-size:11px;line-height:11px;color:#000;left:1170px;">ZH</div>
<div class="t" style="top:704px;font-size:11px;line-height:11px;color:#000;left:1240px;">Zeltweg 12</div>
<div class="t" style="top:704px;font-size:11px;line-height:11px;color:#228822;right:233px;">8610</div>
<div class="t" style="top:704px;font-size:11px;line-height:11px;color:#000;left:1432px;">Uster</div>
<div class="t" style="top:704px;font-size:11px;line-height:11px;color:#000;left:1553px;">CH</div>
<div class="r" style="left:331px;top:130px;width:1px;height:591px;background:#d9d9d9;"></div>
<div class="r" style="left:358px;top:130px;width:1px;height:591px;background:#d9d9d9;"></div>
<div class="r" style="left:384px;top:130px;width:1px;height:591px;background:#d9d9d9;"></div>
<div class="r" style="left:594px;top:130px;width:1px;height:591px;background:#d9d9d9;"></div>
<div class="r" style="left:662px;top:130px;width:1px;height:591px;background:#d9d9d9;"></div>
<div class="r" style="left:764px;top:130px;width:1px;height:591px;background:#d9d9d9;"></div>
<div class="r" style="left:852px;top:130px;width:1px;height:591px;background:#d9d9d9;"></div>
<div class="r" style="left:1042px;top:130px;width:1px;height:591px;background:#d9d9d9;"></div>
<div class="r" style="left:1091px;top:130px;width:1px;height:591px;background:#d9d9d9;"></div>
<div class="r" style="left:1164px;top:130px;width:1px;height:591px;background:#d9d9d9;"></div>
<div class="r" style="left:1234px;top:130px;width:1px;height:591px;background:#d9d9d9;"></div>
<div class="r" style="left:1362px;top:130px;width:1px;height:591px;background:#d9d9d9;"></div>
<div class="r" style="left:1426px;top:130px;width:1px;height:591px;background:#d9d9d9;"></div>
<div class="r" style="left:1547px;top:130px;width:1px;height:591px;background:#d9d9d9;"></div>
</body></html>
